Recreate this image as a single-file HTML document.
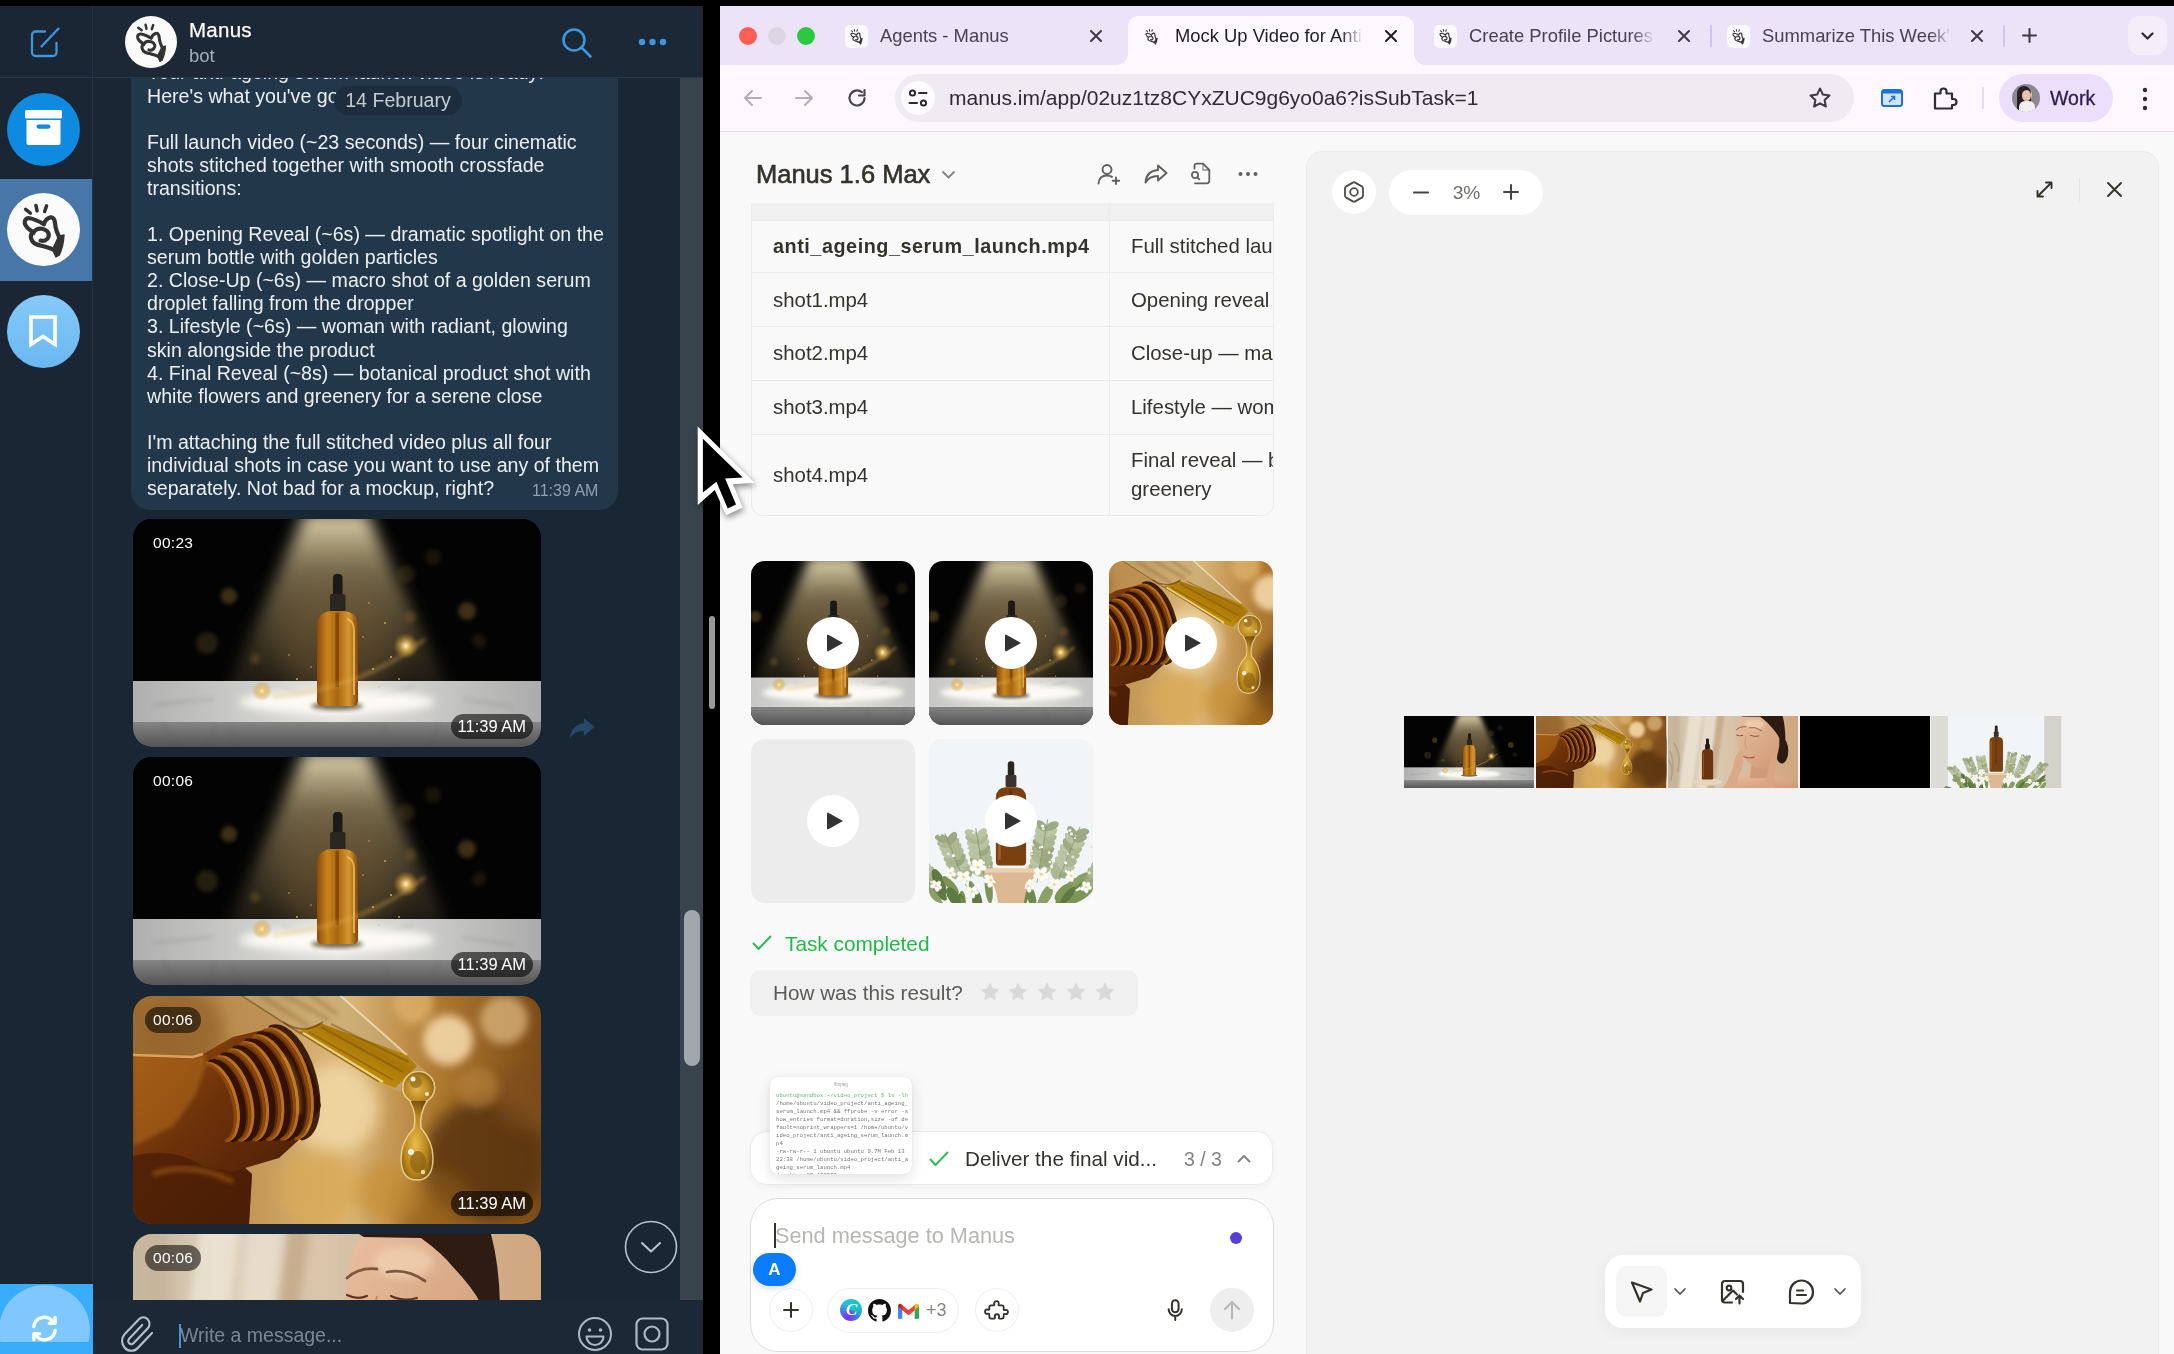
<!DOCTYPE html>
<html lang="en">
<head>
<meta charset="utf-8">
<title>Manus</title>
<style>
*{box-sizing:border-box;margin:0;padding:0}
html,body{width:2174px;height:1354px;overflow:hidden;background:#000}
body{position:relative;font-family:"Liberation Sans",sans-serif;color:#fff;-webkit-font-smoothing:antialiased}
.a{position:absolute}
#tg,#br{will-change:transform}
svg{display:block;overflow:visible}
.nw{white-space:nowrap}
/* ---------- left app ---------- */
#tg{left:0;top:6px;width:703px;height:1348px;background:#192735;overflow:hidden}
#side{left:0;top:0;width:93px;height:1348px;background:#1a2633;border-right:1px solid #243241}
#hdr{left:93px;top:0;width:610px;height:71px;background:#1c2835}
#hline{left:0;top:71px;width:703px;height:1px;background:#2a3847}
#chat{left:93px;top:72px;width:610px;height:1222px;background:#192735;overflow:hidden}
#inbar{left:93px;top:1294px;width:610px;height:54px;background:#1c2835}
.circ{border-radius:50%;width:73px;height:73px;left:7px}
/* ---------- browser ---------- */
#br{left:720px;top:6px;width:1454px;height:1348px;background:#f9f9f9;overflow:hidden}
#tabs{left:0;top:0;width:1454px;height:59px;background:#ece3f8}
#tool{left:0;top:59px;width:1454px;height:67px;background:#fdf8ff;border-bottom:1px solid #e6dfeb}
#page{left:0;top:126px;width:1454px;height:1222px;background:#f9f9f9}
#panel{left:586px;top:19px;width:853px;height:1210px;background:#f2f2f2;border:1px solid #ebebeb;border-radius:16px 16px 0 0}

/* chat */
#hdr .nm{left:96px;top:12px;font-size:20.5px;font-weight:400;color:#fff;-webkit-text-stroke:.25px #fff;letter-spacing:.25px}
#hdr .sub{left:96px;top:39px;font-size:18.5px;color:#a3afba}
#bub{left:38px;top:-40px;width:487px;height:472px;background:#23374a;border-radius:0 0 19px 19px}
#msg{left:54px;top:-16.600px;font-size:19.600px;line-height:23.100px;color:#ebeff3;white-space:nowrap}
#msgt{left:439px;top:404px;font-size:16px;color:#8ea1b2}
#pill{left:241px;top:8px;width:128px;height:29px;border-radius:15px;background:#1d2d3d;font-size:19.600px;line-height:29px;text-align:center;color:#c4ccd4}
.vid{left:40px;width:408px;height:228px;border-radius:19px;overflow:hidden;background:#000}
.dur{left:12px;top:11px;height:26px;padding:0 8px;border-radius:13px;background:rgba(0,0,0,.55);font-size:15.500px;line-height:26px;color:#fff;letter-spacing:.3px}
.tm{right:8px;bottom:8px;height:25px;padding:0 7px;border-radius:12.500px;background:rgba(0,0,0,.58);font-size:16.500px;line-height:25px;color:#fff}
#ph{left:87px;top:24px;font-size:19.500px;color:#7b8894}

/* tabs */
.tl{top:21px;width:18px;height:18px;border-radius:50%}
.fav{top:19px;width:23px;height:23px;border-radius:5px;background:#fbf8fe}
.tt{top:19px;font-size:18.400px;line-height:22px;color:#48414f;overflow:hidden;-webkit-mask-image:linear-gradient(90deg,#000 calc(100% - 22px),transparent);mask-image:linear-gradient(90deg,#000 calc(100% - 22px),transparent)}
.tx{top:24px}
.tsep{top:19px;width:2px;height:22px;background:#cfc4ec;border-radius:1px}
#atab{left:408px;top:10px;width:286px;height:49px;background:#fdf8ff;border-radius:11px 11px 0 0}
#atab:before,#atab:after{content:"";position:absolute;bottom:0;width:11px;height:11px;background:radial-gradient(circle at 0 0,transparent 10.500px,#fdf8ff 11px)}
#atab:before{left:-11px}
#atab:after{right:-11px;background:radial-gradient(circle at 100% 0,transparent 10.500px,#fdf8ff 11px)}
#omni{left:175px;top:9px;width:959px;height:48px;border-radius:24px;background:#f0eaf3}
#url{left:229px;top:20px;font-size:21px;line-height:26px;color:#2f2b33}
#chip{left:1279px;top:9px;width:114px;height:48px;border-radius:24px;background:#ebdffb}

/* page */
#ttl{left:36px;top:27px;font-size:25.500px;line-height:30px;color:#34322d;-webkit-text-stroke:.6px #34322d}
#tbl{left:31px;top:71px;width:523px;height:313px;border:1px solid #ebebeb;border-top:none;border-radius:0 0 12px 12px;overflow:hidden;background:#f9f9f9}
#tbl .h{left:0;top:0;width:523px;height:17px;background:#f0f0f0}
#tbl .r{left:0;width:523px;height:1px;background:#ebebeb}
#tbl .c{left:357px;top:0;width:1px;height:313px;background:#ebebeb}
#tbl .t{font-size:20.400px;line-height:29px;color:#34322d;white-space:nowrap}
.tile{width:164px;height:164px;border-radius:14px;overflow:hidden;background:#ececec}
.play{left:56px;top:56px;width:52px;height:52px;border-radius:50%;background:#fff}
.play:after{content:"";position:absolute;left:20px;top:16.500px;border-left:16px solid #333;border-top:9.500px solid transparent;border-bottom:9.500px solid transparent;border-radius:2px}
.ib{border-radius:50%;border:1px solid #eeeeee;background:#fff}
</style>
</head>
<body>
<svg width="0" height="0" style="position:absolute">
<defs>
<symbol id="hand" viewBox="0 0 100 100">
  <g fill="none" stroke="#333" stroke-width="5.8" stroke-linecap="round" stroke-linejoin="round">
    <path d="M25.5 22.5 L32 27.5 M39.6 17 L41.2 24.5 M54.2 17.6 L51.6 25.4" stroke-width="4.8"/>
    <path d="M50.5 42.5 C44 39 37 35.5 31 34.6 C25.5 34 23.5 38 24.5 42 C25.5 46.5 30 50 35.5 53.5 C32 57 32 62 35 66.5 C38 71 44 71.5 50 73 C56 74.5 60 76 65 78"/>
    <path d="M50.5 42.5 C52 38 55 34.5 59 33.5 C63 32.8 65 35.5 65.5 39.5 C66 44 66.5 48 68 52 C69.5 55.5 70 58 72 61"/>
    <path d="M46 65.2 C50 66.5 55.5 65 57 59.5 C58.2 54 54 50 48 49 C42 48.2 37.5 51 36 55"/>
  </g>
  <path d="M63 76 L70 61 L74 58.5 L78 57.5 C77.5 68 75 78 71.5 85 L67 87.5 C65 83.5 64 80 62 77.5 Z" fill="#333" stroke="#333" stroke-width="2" stroke-linejoin="round"/>
</symbol>
</defs></svg>
<svg width="0" height="0" style="position:absolute">
<defs>
<filter id="b2" x="-30%" y="-30%" width="160%" height="160%"><feGaussianBlur stdDeviation="2"/></filter>
<filter id="b4" x="-30%" y="-30%" width="160%" height="160%"><feGaussianBlur stdDeviation="4"/></filter>
<filter id="b8" x="-30%" y="-30%" width="160%" height="160%"><feGaussianBlur stdDeviation="8"/></filter>
<filter id="b14" x="-40%" y="-40%" width="180%" height="180%"><feGaussianBlur stdDeviation="14"/></filter>
<linearGradient id="coneg" x1="0" y1="0" x2="0" y2="1"><stop offset="0" stop-color="#e6dab4" stop-opacity="1"/><stop offset=".3" stop-color="#ad9b70" stop-opacity=".7"/><stop offset="1" stop-color="#6b5a3a" stop-opacity=".2"/></linearGradient>
<linearGradient id="mtop" x1="0" y1="0" x2="1" y2="0"><stop offset="0" stop-color="#afafaf"/><stop offset=".3" stop-color="#cfcfcd"/><stop offset=".5" stop-color="#e4e3de"/><stop offset=".72" stop-color="#cbcbc9"/><stop offset="1" stop-color="#ababab"/></linearGradient>
<linearGradient id="mfront" x1="0" y1="0" x2="0" y2="1"><stop offset="0" stop-color="#858585"/><stop offset="1" stop-color="#525252"/></linearGradient>
<linearGradient id="amber" x1="0" y1="0" x2="1" y2="0"><stop offset="0" stop-color="#8a4a08"/><stop offset=".25" stop-color="#c8851e"/><stop offset=".5" stop-color="#a8660f"/><stop offset=".78" stop-color="#d69830"/><stop offset="1" stop-color="#84450a"/></linearGradient>
<radialGradient id="spark"><stop offset="0" stop-color="#fff6d8"/><stop offset=".25" stop-color="#f1c66a" stop-opacity=".9"/><stop offset="1" stop-color="#c08a20" stop-opacity="0"/></radialGradient>

<!-- scene 1 : bottle under spotlight -->
<symbol id="sc1" viewBox="0 0 408 228" preserveAspectRatio="xMidYMid slice">
  <rect width="408" height="228" fill="#030303"/>
  <polygon points="172,-6 234,-6 318,176 92,176" fill="url(#coneg)" filter="url(#b8)"/>
  <ellipse cx="204" cy="120" rx="60" ry="60" fill="#7a6238" opacity=".45" filter="url(#b14)"/>
  <g fill="#6d5528" opacity=".55" filter="url(#b2)"><circle cx="96" cy="77" r="8"/><circle cx="334" cy="92" r="9"/><circle cx="74" cy="124" r="11" opacity=".6"/><circle cx="273" cy="55" r="9" opacity=".5"/><circle cx="277" cy="98" r="6"/><circle cx="122" cy="140" r="5"/><circle cx="300" cy="38" r="8" opacity=".4"/><circle cx="346" cy="122" r="7" opacity=".4"/></g>
  <rect y="162" width="408" height="42" fill="url(#mtop)"/>
  <rect y="203" width="408" height="26" fill="url(#mfront)"/>
  <path d="M30 204l14 24M82 205l-6 23M96 208l10 20M250 206l8 22M306 204l-10 24M384 205l6 23M150 170l40 10M280 168l-46 14M330 180l50 8M20 186l60 -6" stroke="#5a5a5a" stroke-width="1.600" opacity=".3" fill="none" filter="url(#b2)"/>
  <ellipse cx="204" cy="183" rx="98" ry="12" fill="#fffdf6" opacity=".92" filter="url(#b4)"/>
  <ellipse cx="204" cy="187" rx="26" ry="4" fill="#3a2a12" opacity=".7" filter="url(#b2)"/>
  <rect x="200" y="55" width="9.500" height="24" rx="4" fill="#1c1a18"/>
  <rect x="197" y="75" width="15.500" height="19" rx="2" fill="#2a2622"/>
  <path d="M184 108Q184 93 198 92H211Q225 93 225 108V182Q225 187 220 187H189Q184 187 184 182Z" fill="url(#amber)"/>
  <rect x="202.500" y="94" width="3.500" height="74" fill="#7a3e04" opacity=".75"/>
  <path d="M214 100Q221 102 221 112V176" stroke="#f6c768" stroke-width="2" fill="none" opacity=".7"/>
  <path d="M140 178Q230 170 292 120" stroke="#e6b552" stroke-width="2.500" fill="none" opacity=".55" filter="url(#b2)"/>
  <circle cx="273" cy="127" r="13" fill="url(#spark)"/><circle cx="129" cy="172" r="10" fill="url(#spark)"/>
  <g fill="#e9c271" opacity=".8"><circle cx="240" cy="150" r="1"/><circle cx="252" cy="104" r=".9"/><circle cx="164" cy="160" r="1"/><circle cx="236" cy="84" r=".8"/><circle cx="258" cy="138" r="1.100"/><circle cx="178" cy="148" r=".8"/><circle cx="246" cy="168" r="1"/><circle cx="156" cy="136" r=".8"/><circle cx="230" cy="118" r=".8"/><circle cx="266" cy="160" r=".9"/></g>
</symbol>

<!-- scene 2 : dropper macro -->
<linearGradient id="s2bg" x1="0" y1="0" x2="1" y2="0"><stop offset="0" stop-color="#9c6a30"/><stop offset=".3" stop-color="#c49856"/><stop offset=".52" stop-color="#dcb97e"/><stop offset=".74" stop-color="#b07a30"/><stop offset="1" stop-color="#7c4c18"/></linearGradient>
<linearGradient id="s2bot" x1="0" y1="0" x2="1" y2="1"><stop offset="0" stop-color="#9a5614"/><stop offset=".4" stop-color="#6e320a"/><stop offset="1" stop-color="#3e1704"/></linearGradient>
<linearGradient id="s2ring" x1="0" y1="0" x2="1" y2="1"><stop offset="0" stop-color="#8a4710"/><stop offset=".5" stop-color="#5e2806"/><stop offset="1" stop-color="#7a3a0c"/></linearGradient>
<linearGradient id="s2liq" x1="0" y1="1" x2="1" y2="0"><stop offset="0" stop-color="#f0d468"/><stop offset=".3" stop-color="#c9960c"/><stop offset=".6" stop-color="#a87608"/><stop offset="1" stop-color="#d8ae2c"/></linearGradient>
<radialGradient id="s2drop" cx=".45" cy=".55" r=".6"><stop offset="0" stop-color="#e8bc4c"/><stop offset=".6" stop-color="#b8861c"/><stop offset="1" stop-color="#6e480a"/></radialGradient>
<symbol id="sc2" viewBox="0 0 408 228" preserveAspectRatio="xMidYMid slice">
  <rect width="408" height="228" fill="url(#s2bg)"/>
  <g filter="url(#b8)"><circle cx="352" cy="165" r="62" fill="#58320e" opacity=".85"/><circle cx="395" cy="100" r="34" fill="#7c4c1a" opacity=".7"/><circle cx="300" cy="215" r="40" fill="#8a5818" opacity=".6"/><circle cx="202" cy="112" r="44" fill="#efd6a2" opacity=".9"/><circle cx="188" cy="192" r="40" fill="#d8aa58" opacity=".85"/><circle cx="254" cy="196" r="30" fill="#c68e34" opacity=".7"/><circle cx="50" cy="36" r="42" fill="#92602a" opacity=".7"/><circle cx="130" cy="22" r="30" fill="#b88a4e" opacity=".6"/></g>
  <g filter="url(#b4)"><circle cx="315" cy="44" r="25" fill="#efd2a2" opacity=".95"/><circle cx="280" cy="8" r="20" fill="#dcae68" opacity=".85"/><circle cx="371" cy="24" r="24" fill="#d2aa74" opacity=".85"/><circle cx="345" cy="92" r="20" fill="#b98844" opacity=".5"/></g>
  <!-- bottle silhouette -->
  <path d="M0 59L60 61L70 58L100 41L138 32Q176 46 188 110L169 141L146 162L112 172L119 178L116 228H0Z" fill="url(#s2bot)"/>
  <path d="M0 59L60 61L70 58L74 66L62 100L40 130L0 150Z" fill="#b46a1c" opacity=".55" filter="url(#b2)"/>
  <path d="M0 160Q40 150 70 170L100 176L112 172L119 178L116 228H0Z" fill="#4a1d05" opacity=".75"/>
  <path d="M20 178Q60 165 100 186" stroke="#a85e18" stroke-width="5" fill="none" opacity=".6" filter="url(#b2)"/>
  <path d="M0 59L60 61L70 58" stroke="#e0aa66" stroke-width="2.500" fill="none" opacity=".9"/>
  <path d="M78.3 66.7A18.9 39.6 -15.700 0 1 99.7 143.0" fill="none" stroke="#2e0f02" stroke-width="6.500" opacity=".9" stroke-linecap="round"/><path d="M78.3 66.7A18.9 39.6 -15.700 0 1 99.7 143.0" fill="none" stroke="#c97c22" stroke-width="3.200" opacity=".85" stroke-linecap="round" transform="translate(-4.800 1.300)"/><path d="M78.3 66.7A18.9 39.6 -15.700 0 1 99.7 143.0" fill="none" stroke="#8c4a10" stroke-width="3" opacity=".9" transform="translate(-8 2.200)"/><path d="M90.4 59.8A20.5 43.0 -15.700 0 1 113.6 142.6" fill="none" stroke="#2e0f02" stroke-width="6.500" opacity=".9" stroke-linecap="round"/><path d="M90.4 59.8A20.5 43.0 -15.700 0 1 113.6 142.6" fill="none" stroke="#c97c22" stroke-width="3.200" opacity=".85" stroke-linecap="round" transform="translate(-4.800 1.300)"/><path d="M90.4 59.8A20.5 43.0 -15.700 0 1 113.6 142.6" fill="none" stroke="#8c4a10" stroke-width="3" opacity=".9" transform="translate(-8 2.200)"/><path d="M102.4 52.9A22.1 46.4 -15.700 0 1 127.6 142.2" fill="none" stroke="#2e0f02" stroke-width="6.500" opacity=".9" stroke-linecap="round"/><path d="M102.4 52.9A22.1 46.4 -15.700 0 1 127.6 142.2" fill="none" stroke="#c97c22" stroke-width="3.200" opacity=".85" stroke-linecap="round" transform="translate(-4.800 1.300)"/><path d="M102.4 52.9A22.1 46.4 -15.700 0 1 127.6 142.2" fill="none" stroke="#8c4a10" stroke-width="3" opacity=".9" transform="translate(-8 2.200)"/><path d="M114.5 45.9A23.8 49.8 -15.700 0 1 141.5 141.8" fill="none" stroke="#2e0f02" stroke-width="6.500" opacity=".9" stroke-linecap="round"/><path d="M114.5 45.9A23.8 49.8 -15.700 0 1 141.5 141.8" fill="none" stroke="#c97c22" stroke-width="3.200" opacity=".85" stroke-linecap="round" transform="translate(-4.800 1.300)"/><path d="M114.5 45.9A23.8 49.8 -15.700 0 1 141.5 141.8" fill="none" stroke="#8c4a10" stroke-width="3" opacity=".9" transform="translate(-8 2.200)"/><path d="M126.6 39.0A25.4 53.2 -15.700 0 1 155.4 141.5" fill="none" stroke="#2e0f02" stroke-width="6.500" opacity=".9" stroke-linecap="round"/><path d="M126.6 39.0A25.4 53.2 -15.700 0 1 155.4 141.5" fill="none" stroke="#c97c22" stroke-width="3.200" opacity=".85" stroke-linecap="round" transform="translate(-4.800 1.300)"/><path d="M126.6 39.0A25.4 53.2 -15.700 0 1 155.4 141.5" fill="none" stroke="#8c4a10" stroke-width="3" opacity=".9" transform="translate(-8 2.200)"/><path d="M138.7 32.1A27.0 56.6 -15.700 0 1 169.3 141.1" fill="none" stroke="#2e0f02" stroke-width="6.500" opacity=".9" stroke-linecap="round"/><path d="M138.7 32.1A27.0 56.6 -15.700 0 1 169.3 141.1" fill="none" stroke="#c97c22" stroke-width="3.200" opacity=".85" stroke-linecap="round" transform="translate(-4.800 1.300)"/><path d="M138.7 32.1A27.0 56.6 -15.700 0 1 169.3 141.1" fill="none" stroke="#8c4a10" stroke-width="3" opacity=".9" transform="translate(-8 2.200)"/>
  <path d="M150 60Q168 84 166 118" stroke="#e8a848" stroke-width="3" fill="none" opacity=".5" filter="url(#b2)"/>
  <!-- dropper glass -->
  <path d="M106 -2L205.400 -2L274 59L296 78L266 96L245.600 85.600L165.300 36Z" fill="#c4a872" opacity=".6"/><path d="M128 0L176 30M150 -2L196 24M176 -2L204 18" stroke="#6a4616" stroke-width="3" opacity=".35" fill="none" filter="url(#b2)"/>
  <path d="M165.300 36L187 27L274 59L284 70L262 92L245.600 85.600Z" fill="url(#s2liq)"/>
  <path d="M176 36L260 84M188 31L270 76M198 28L276 66" stroke="#7a5206" stroke-width="2" opacity=".5" fill="none"/>
  <path d="M170 37L250 86" stroke="#f6e08a" stroke-width="2.600" opacity=".85" fill="none"/>
  <path d="M106 -2L165.300 36L245.600 85.600" stroke="#6a4a1a" stroke-width="1.500" opacity=".6" fill="none"/><path d="M205.400 -2L274 59" stroke="#fff4d6" stroke-width="2" opacity=".6" fill="none"/>
  <path d="M150 26Q170 40 190 26" stroke="#5a3a10" stroke-width="2" opacity=".55" fill="none"/>
  <!-- tip + drop -->
  <circle cx="285.700" cy="91.400" r="17" fill="url(#s2drop)" opacity=".92"/>
  <circle cx="285.700" cy="91.400" r="16" fill="none" stroke="#f4e0a4" stroke-width="1.800" opacity=".8"/>
  <circle cx="283" cy="86" r="6" fill="#8a6418" opacity=".6"/><circle cx="280" cy="83" r="2.500" fill="#fff" opacity=".9"/><circle cx="294" cy="98" r="2" fill="#fff" opacity=".8"/>
  <path d="M277 105Q284 118 281 132Q268 146 268 162Q268 184 284 184Q300 184 300 162Q300 146 288 132Q286 118 294 105Z" fill="url(#s2drop)"/>
  <path d="M277 105Q284 118 281 132Q268 146 268 162Q268 184 284 184Q300 184 300 162Q300 146 288 132Q286 118 294 105" fill="none" stroke="#f2dc9c" stroke-width="1.500" opacity=".85"/>
  <ellipse cx="285" cy="166" rx="8" ry="11" fill="#7a520a" opacity=".55"/><circle cx="278" cy="156" r="3" fill="#fff" opacity=".85"/><circle cx="290" cy="176" r="2.200" fill="#ffe9a8" opacity=".9"/>
</symbol>
</defs></svg>
<svg width="0" height="0" style="position:absolute">
<defs>
<linearGradient id="s3bg" x1="0" y1="0" x2="1" y2="0"><stop offset="0" stop-color="#c7b59b"/><stop offset=".22" stop-color="#dccfb9"/><stop offset=".45" stop-color="#d6c6ad"/><stop offset=".8" stop-color="#d3b08a"/><stop offset="1" stop-color="#cfa680"/></linearGradient>
<linearGradient id="skin" x1="0" y1="0" x2="1" y2="1"><stop offset="0" stop-color="#e8bfa0"/><stop offset="1" stop-color="#cf9873"/></linearGradient>
<!-- scene 3 : woman -->
<symbol id="sc3" viewBox="0 0 408 228" preserveAspectRatio="xMidYMid slice">
  <rect width="408" height="228" fill="url(#s3bg)"/>
  <g filter="url(#b4)"><rect x="52" y="-10" width="40" height="250" fill="#ece3d4" opacity=".85" transform="rotate(8 70 100)"/><rect x="104" y="-10" width="36" height="250" fill="#eadfce" opacity=".8" transform="rotate(6 120 100)"/><rect x="146" y="-10" width="22" height="250" fill="#c2a482" opacity=".75" transform="rotate(8 156 60)"/><rect x="176" y="-10" width="30" height="250" fill="#dcc4a6" opacity=".7"/><rect x="14" y="-10" width="22" height="250" fill="#bfae94" opacity=".5"/></g>
  <path d="M4 110Q20 130 12 190M18 86Q44 120 30 176M2 140Q18 160 8 206" stroke="#96866a" stroke-width="5" fill="none" opacity=".45" filter="url(#b2)"/>
  <!-- shoulders -->
  <path d="M168 228Q190 192 250 186L330 186Q392 196 408 214V228Z" fill="url(#skin)"/>
  <!-- hair back / bun -->
  <ellipse cx="356" cy="110" rx="20" ry="40" fill="#2b1a12"/>
  <path d="M226 0L358 0Q366 30 367 70Q366 110 350 132L320 60Z" fill="#2e1c13"/>
  <!-- neck -->
  <path d="M262 150L330 150L334 196L256 196Z" fill="#cf9a76"/>
  <!-- face -->
  <path d="M213 78Q211 30 228 3L288 4Q310 20 320 33Q340 54 348 70Q352 120 324 152Q296 176 270 160Q222 128 213 78Z" fill="url(#skin)"/>
  <ellipse cx="270" cy="28" rx="30" ry="16" fill="#f3d4b4" opacity=".7" filter="url(#b4)"/>
  <path d="M214 44Q226 33 244 35" stroke="#6a452e" stroke-width="2.800" fill="none" stroke-linecap="round" opacity=".85"/>
  <path d="M254 38Q274 34 292 47" stroke="#6a452e" stroke-width="2.800" fill="none" stroke-linecap="round" opacity=".85"/>
  <path d="M214 61Q224 66 234 62M258 62Q270 68 284 64" stroke="#5a3622" stroke-width="2.200" fill="none" stroke-linecap="round"/>
  <path d="M244 62Q236 96 248 104" stroke="#bf8862" stroke-width="2" fill="none"/>
  <path d="M236 128Q252 136 270 130" stroke="#b5564a" stroke-width="3.500" fill="none" stroke-linecap="round"/>
  <!-- hands -->
  <path d="M176 228L204 160Q208 124 226 108Q236 102 236 114L234 150Q232 170 222 186L212 228Z" fill="#dca988"/>
  <path d="M300 228L312 176Q316 140 330 118Q340 108 342 122L338 160L330 228Z" fill="#d9a482"/>
  <!-- bottle + stone -->
  <ellipse cx="124" cy="208" rx="46" ry="11" fill="#e6d6bf"/>
  <rect x="119" y="72" width="9" height="22" rx="3" fill="#1c1412"/><rect x="116" y="90" width="15" height="16" rx="2" fill="#241a16"/>
  <path d="M106 118Q106 106 118 105H130Q141 106 141 118V196Q141 200 137 200H110Q106 200 106 196Z" fill="#6a3410"/>
  <path d="M111 116V192" stroke="#a8622a" stroke-width="3" opacity=".7"/>
</symbol>

<!-- scene 5 : botanical -->
<symbol id="sc5" viewBox="0 0 408 228" preserveAspectRatio="xMidYMid slice">
  <rect width="408" height="228" fill="#f1f5f7"/>
  
  <rect width="53" height="228" fill="#dcdbd6"/><rect x="354" width="54" height="228" fill="#d5d2cb"/>
  <ellipse cx="129" cy="190" rx="5.5" ry="10.0" transform="rotate(-77 129 190)" fill="#a9b58e" opacity="0.95"/><ellipse cx="143" cy="190" rx="5.5" ry="10.0" transform="rotate(33 143 190)" fill="#98a77c" opacity="0.95"/><ellipse cx="126" cy="183" rx="5.5" ry="10.0" transform="rotate(-77 126 183)" fill="#b7c2a0" opacity="0.95"/><ellipse cx="140" cy="183" rx="5.5" ry="10.0" transform="rotate(33 140 183)" fill="#a9b58e" opacity="0.95"/><ellipse cx="123" cy="175" rx="5.5" ry="10.0" transform="rotate(-77 123 175)" fill="#a9b58e" opacity="0.95"/><ellipse cx="137" cy="175" rx="5.5" ry="10.0" transform="rotate(33 137 175)" fill="#b7c2a0" opacity="0.95"/><ellipse cx="120" cy="168" rx="5.5" ry="10.0" transform="rotate(-77 120 168)" fill="#a9b58e" opacity="0.95"/><ellipse cx="134" cy="168" rx="5.5" ry="10.0" transform="rotate(33 134 168)" fill="#98a77c" opacity="0.95"/><ellipse cx="117" cy="160" rx="5.5" ry="10.0" transform="rotate(-77 117 160)" fill="#b7c2a0" opacity="0.95"/><ellipse cx="131" cy="160" rx="5.5" ry="10.0" transform="rotate(33 131 160)" fill="#a9b58e" opacity="0.95"/><ellipse cx="114" cy="153" rx="5.5" ry="10.0" transform="rotate(-77 114 153)" fill="#b7c2a0" opacity="0.95"/><ellipse cx="128" cy="153" rx="5.5" ry="10.0" transform="rotate(33 128 153)" fill="#a9b58e" opacity="0.95"/><ellipse cx="111" cy="146" rx="5.5" ry="10.0" transform="rotate(-77 111 146)" fill="#a9b58e" opacity="0.95"/><ellipse cx="125" cy="146" rx="5.5" ry="10.0" transform="rotate(33 125 146)" fill="#a9b58e" opacity="0.95"/><ellipse cx="108" cy="138" rx="5.5" ry="10.0" transform="rotate(-77 108 138)" fill="#98a77c" opacity="0.95"/><ellipse cx="122" cy="138" rx="5.5" ry="10.0" transform="rotate(33 122 138)" fill="#98a77c" opacity="0.95"/><path d="M142 205L112 131" stroke="#8b9a70" stroke-width="1.200"/><ellipse cx="92" cy="204" rx="5.5" ry="10.0" transform="rotate(-95 92 204)" fill="#a9b58e" opacity="0.95"/><ellipse cx="106" cy="204" rx="5.5" ry="10.0" transform="rotate(15 106 204)" fill="#a9b58e" opacity="0.95"/><ellipse cx="87" cy="198" rx="5.5" ry="10.0" transform="rotate(-95 87 198)" fill="#b7c2a0" opacity="0.95"/><ellipse cx="101" cy="198" rx="5.5" ry="10.0" transform="rotate(15 101 198)" fill="#98a77c" opacity="0.95"/><ellipse cx="82" cy="193" rx="5.5" ry="10.0" transform="rotate(-95 82 193)" fill="#a9b58e" opacity="0.95"/><ellipse cx="96" cy="193" rx="5.5" ry="10.0" transform="rotate(15 96 193)" fill="#b7c2a0" opacity="0.95"/><ellipse cx="78" cy="187" rx="5.5" ry="10.0" transform="rotate(-95 78 187)" fill="#a9b58e" opacity="0.95"/><ellipse cx="92" cy="187" rx="5.5" ry="10.0" transform="rotate(15 92 187)" fill="#a9b58e" opacity="0.95"/><ellipse cx="73" cy="182" rx="5.5" ry="10.0" transform="rotate(-95 73 182)" fill="#b7c2a0" opacity="0.95"/><ellipse cx="87" cy="182" rx="5.5" ry="10.0" transform="rotate(15 87 182)" fill="#b7c2a0" opacity="0.95"/><ellipse cx="69" cy="176" rx="5.5" ry="10.0" transform="rotate(-95 69 176)" fill="#b7c2a0" opacity="0.95"/><ellipse cx="83" cy="176" rx="5.5" ry="10.0" transform="rotate(15 83 176)" fill="#a9b58e" opacity="0.95"/><ellipse cx="64" cy="171" rx="5.5" ry="10.0" transform="rotate(-95 64 171)" fill="#b7c2a0" opacity="0.95"/><ellipse cx="78" cy="171" rx="5.5" ry="10.0" transform="rotate(15 78 171)" fill="#b7c2a0" opacity="0.95"/><ellipse cx="59" cy="165" rx="5.5" ry="10.0" transform="rotate(-95 59 165)" fill="#98a77c" opacity="0.95"/><ellipse cx="73" cy="165" rx="5.5" ry="10.0" transform="rotate(15 73 165)" fill="#a9b58e" opacity="0.95"/><path d="M108 215L62 160" stroke="#8b9a70" stroke-width="1.200"/><ellipse cx="158" cy="185" rx="5.5" ry="10.0" transform="rotate(-65 158 185)" fill="#a9b58e" opacity="0.95"/><ellipse cx="172" cy="185" rx="5.5" ry="10.0" transform="rotate(45 172 185)" fill="#b7c2a0" opacity="0.95"/><ellipse cx="157" cy="177" rx="5.5" ry="10.0" transform="rotate(-65 157 177)" fill="#a9b58e" opacity="0.95"/><ellipse cx="171" cy="177" rx="5.5" ry="10.0" transform="rotate(45 171 177)" fill="#98a77c" opacity="0.95"/><ellipse cx="156" cy="170" rx="5.5" ry="10.0" transform="rotate(-65 156 170)" fill="#98a77c" opacity="0.95"/><ellipse cx="170" cy="170" rx="5.5" ry="10.0" transform="rotate(45 170 170)" fill="#a9b58e" opacity="0.95"/><ellipse cx="154" cy="162" rx="5.5" ry="10.0" transform="rotate(-65 154 162)" fill="#b7c2a0" opacity="0.95"/><ellipse cx="168" cy="162" rx="5.5" ry="10.0" transform="rotate(45 168 162)" fill="#a9b58e" opacity="0.95"/><ellipse cx="153" cy="155" rx="5.5" ry="10.0" transform="rotate(-65 153 155)" fill="#b7c2a0" opacity="0.95"/><ellipse cx="167" cy="155" rx="5.5" ry="10.0" transform="rotate(45 167 155)" fill="#98a77c" opacity="0.95"/><ellipse cx="152" cy="147" rx="5.5" ry="10.0" transform="rotate(-65 152 147)" fill="#b7c2a0" opacity="0.95"/><ellipse cx="166" cy="147" rx="5.5" ry="10.0" transform="rotate(45 166 147)" fill="#b7c2a0" opacity="0.95"/><ellipse cx="150" cy="139" rx="5.5" ry="10.0" transform="rotate(-65 150 139)" fill="#a9b58e" opacity="0.95"/><ellipse cx="164" cy="139" rx="5.5" ry="10.0" transform="rotate(45 164 139)" fill="#a9b58e" opacity="0.95"/><ellipse cx="149" cy="132" rx="5.5" ry="10.0" transform="rotate(-65 149 132)" fill="#b7c2a0" opacity="0.95"/><ellipse cx="163" cy="132" rx="5.5" ry="10.0" transform="rotate(45 163 132)" fill="#b7c2a0" opacity="0.95"/><path d="M168 200L155 124" stroke="#8b9a70" stroke-width="1.200"/><ellipse cx="266" cy="188" rx="5.5" ry="10.0" transform="rotate(-33 266 188)" fill="#a9b58e" opacity="0.95"/><ellipse cx="280" cy="188" rx="5.5" ry="10.0" transform="rotate(77 280 188)" fill="#98a77c" opacity="0.95"/><ellipse cx="269" cy="180" rx="5.5" ry="10.0" transform="rotate(-33 269 180)" fill="#a9b58e" opacity="0.95"/><ellipse cx="283" cy="180" rx="5.5" ry="10.0" transform="rotate(77 283 180)" fill="#b7c2a0" opacity="0.95"/><ellipse cx="272" cy="172" rx="5.5" ry="10.0" transform="rotate(-33 272 172)" fill="#b7c2a0" opacity="0.95"/><ellipse cx="286" cy="172" rx="5.5" ry="10.0" transform="rotate(77 286 172)" fill="#a9b58e" opacity="0.95"/><ellipse cx="276" cy="163" rx="5.5" ry="10.0" transform="rotate(-33 276 163)" fill="#b7c2a0" opacity="0.95"/><ellipse cx="290" cy="163" rx="5.5" ry="10.0" transform="rotate(77 290 163)" fill="#a9b58e" opacity="0.95"/><ellipse cx="279" cy="155" rx="5.5" ry="10.0" transform="rotate(-33 279 155)" fill="#b7c2a0" opacity="0.95"/><ellipse cx="293" cy="155" rx="5.5" ry="10.0" transform="rotate(77 293 155)" fill="#a9b58e" opacity="0.95"/><ellipse cx="283" cy="147" rx="5.5" ry="10.0" transform="rotate(-33 283 147)" fill="#98a77c" opacity="0.95"/><ellipse cx="297" cy="147" rx="5.5" ry="10.0" transform="rotate(77 297 147)" fill="#b7c2a0" opacity="0.95"/><ellipse cx="286" cy="138" rx="5.5" ry="10.0" transform="rotate(-33 286 138)" fill="#b7c2a0" opacity="0.95"/><ellipse cx="300" cy="138" rx="5.5" ry="10.0" transform="rotate(77 300 138)" fill="#98a77c" opacity="0.95"/><ellipse cx="289" cy="130" rx="5.5" ry="10.0" transform="rotate(-33 289 130)" fill="#98a77c" opacity="0.95"/><ellipse cx="303" cy="130" rx="5.5" ry="10.0" transform="rotate(77 303 130)" fill="#98a77c" opacity="0.95"/><path d="M266 205L300 122" stroke="#8b9a70" stroke-width="1.200"/><ellipse cx="304" cy="202" rx="5.5" ry="10.0" transform="rotate(-15 304 202)" fill="#98a77c" opacity="0.95"/><ellipse cx="318" cy="202" rx="5.5" ry="10.0" transform="rotate(95 318 202)" fill="#98a77c" opacity="0.95"/><ellipse cx="310" cy="195" rx="5.5" ry="10.0" transform="rotate(-15 310 195)" fill="#98a77c" opacity="0.95"/><ellipse cx="324" cy="195" rx="5.5" ry="10.0" transform="rotate(95 324 195)" fill="#a9b58e" opacity="0.95"/><ellipse cx="316" cy="188" rx="5.5" ry="10.0" transform="rotate(-15 316 188)" fill="#a9b58e" opacity="0.95"/><ellipse cx="330" cy="188" rx="5.5" ry="10.0" transform="rotate(95 330 188)" fill="#b7c2a0" opacity="0.95"/><ellipse cx="321" cy="181" rx="5.5" ry="10.0" transform="rotate(-15 321 181)" fill="#a9b58e" opacity="0.95"/><ellipse cx="335" cy="181" rx="5.5" ry="10.0" transform="rotate(95 335 181)" fill="#a9b58e" opacity="0.95"/><ellipse cx="327" cy="175" rx="5.5" ry="10.0" transform="rotate(-15 327 175)" fill="#b7c2a0" opacity="0.95"/><ellipse cx="341" cy="175" rx="5.5" ry="10.0" transform="rotate(95 341 175)" fill="#98a77c" opacity="0.95"/><ellipse cx="333" cy="168" rx="5.5" ry="10.0" transform="rotate(-15 333 168)" fill="#b7c2a0" opacity="0.95"/><ellipse cx="347" cy="168" rx="5.5" ry="10.0" transform="rotate(95 347 168)" fill="#98a77c" opacity="0.95"/><ellipse cx="338" cy="161" rx="5.5" ry="10.0" transform="rotate(-15 338 161)" fill="#98a77c" opacity="0.95"/><ellipse cx="352" cy="161" rx="5.5" ry="10.0" transform="rotate(95 352 161)" fill="#b7c2a0" opacity="0.95"/><ellipse cx="344" cy="154" rx="5.5" ry="10.0" transform="rotate(-15 344 154)" fill="#98a77c" opacity="0.95"/><ellipse cx="358" cy="154" rx="5.5" ry="10.0" transform="rotate(95 358 154)" fill="#98a77c" opacity="0.95"/><path d="M300 215L357 148" stroke="#8b9a70" stroke-width="1.200"/><ellipse cx="236" cy="182" rx="5.5" ry="10.0" transform="rotate(-45 236 182)" fill="#a9b58e" opacity="0.95"/><ellipse cx="250" cy="182" rx="5.5" ry="10.0" transform="rotate(65 250 182)" fill="#a9b58e" opacity="0.95"/><ellipse cx="238" cy="174" rx="5.5" ry="10.0" transform="rotate(-45 238 174)" fill="#b7c2a0" opacity="0.95"/><ellipse cx="252" cy="174" rx="5.5" ry="10.0" transform="rotate(65 252 174)" fill="#98a77c" opacity="0.95"/><ellipse cx="239" cy="165" rx="5.5" ry="10.0" transform="rotate(-45 239 165)" fill="#a9b58e" opacity="0.95"/><ellipse cx="253" cy="165" rx="5.5" ry="10.0" transform="rotate(65 253 165)" fill="#98a77c" opacity="0.95"/><ellipse cx="241" cy="156" rx="5.5" ry="10.0" transform="rotate(-45 241 156)" fill="#a9b58e" opacity="0.95"/><ellipse cx="255" cy="156" rx="5.5" ry="10.0" transform="rotate(65 255 156)" fill="#98a77c" opacity="0.95"/><ellipse cx="242" cy="147" rx="5.5" ry="10.0" transform="rotate(-45 242 147)" fill="#98a77c" opacity="0.95"/><ellipse cx="256" cy="147" rx="5.5" ry="10.0" transform="rotate(65 256 147)" fill="#a9b58e" opacity="0.95"/><ellipse cx="244" cy="139" rx="5.5" ry="10.0" transform="rotate(-45 244 139)" fill="#b7c2a0" opacity="0.95"/><ellipse cx="258" cy="139" rx="5.5" ry="10.0" transform="rotate(65 258 139)" fill="#a9b58e" opacity="0.95"/><ellipse cx="245" cy="130" rx="5.5" ry="10.0" transform="rotate(-45 245 130)" fill="#b7c2a0" opacity="0.95"/><ellipse cx="259" cy="130" rx="5.5" ry="10.0" transform="rotate(65 259 130)" fill="#b7c2a0" opacity="0.95"/><ellipse cx="247" cy="121" rx="5.5" ry="10.0" transform="rotate(-45 247 121)" fill="#98a77c" opacity="0.95"/><ellipse cx="261" cy="121" rx="5.5" ry="10.0" transform="rotate(65 261 121)" fill="#98a77c" opacity="0.95"/><path d="M240 200L255 112" stroke="#8b9a70" stroke-width="1.200"/><circle cx="258" cy="171" r="1.9" fill="#f1f2e8"/><circle cx="89" cy="128" r="1.5" fill="#dfe5d2"/><circle cx="249" cy="125" r="2.0" fill="#dfe5d2"/><circle cx="226" cy="178" r="1.7" fill="#dfe5d2"/><circle cx="174" cy="177" r="1.2" fill="#f1f2e8"/><circle cx="166" cy="172" r="1.8" fill="#ffffff"/><circle cx="277" cy="131" r="1.5" fill="#f1f2e8"/><circle cx="318" cy="162" r="1.4" fill="#f1f2e8"/><circle cx="218" cy="195" r="2.2" fill="#dfe5d2"/><circle cx="145" cy="155" r="1.6" fill="#f1f2e8"/><circle cx="329" cy="133" r="1.4" fill="#ffffff"/><circle cx="248" cy="121" r="2.2" fill="#ffffff"/><circle cx="141" cy="120" r="1.7" fill="#f1f2e8"/><circle cx="235" cy="147" r="1.4" fill="#dfe5d2"/><circle cx="327" cy="176" r="2.1" fill="#f1f2e8"/><circle cx="313" cy="186" r="2.2" fill="#dfe5d2"/><circle cx="176" cy="154" r="1.3" fill="#dfe5d2"/><circle cx="336" cy="157" r="1.3" fill="#dfe5d2"/><circle cx="84" cy="120" r="1.4" fill="#ffffff"/><circle cx="326" cy="172" r="1.3" fill="#ffffff"/><circle cx="236" cy="133" r="1.5" fill="#f1f2e8"/><circle cx="233" cy="160" r="1.3" fill="#f1f2e8"/><circle cx="338" cy="160" r="1.8" fill="#ffffff"/><circle cx="109" cy="184" r="2.1" fill="#f1f2e8"/><circle cx="294" cy="134" r="1.2" fill="#dfe5d2"/><circle cx="168" cy="179" r="2.3" fill="#dfe5d2"/><circle cx="150" cy="175" r="1.3" fill="#f1f2e8"/><circle cx="210" cy="197" r="1.6" fill="#ffffff"/><circle cx="214" cy="186" r="1.6" fill="#ffffff"/><circle cx="236" cy="187" r="2.1" fill="#ffffff"/><circle cx="288" cy="190" r="2.1" fill="#ffffff"/><circle cx="124" cy="162" r="2.1" fill="#ffffff"/><circle cx="283" cy="160" r="1.4" fill="#dfe5d2"/><circle cx="328" cy="158" r="2.3" fill="#f1f2e8"/><circle cx="328" cy="151" r="1.5" fill="#ffffff"/><circle cx="200" cy="204" r="1.9" fill="#ffffff"/><circle cx="286" cy="127" r="2.0" fill="#f1f2e8"/><circle cx="281" cy="184" r="1.8" fill="#ffffff"/><circle cx="93" cy="200" r="2.1" fill="#f1f2e8"/><circle cx="178" cy="200" r="2.1" fill="#ffffff"/><circle cx="338" cy="122" r="1.9" fill="#f1f2e8"/><circle cx="288" cy="132" r="2.2" fill="#f1f2e8"/><circle cx="247" cy="150" r="1.9" fill="#ffffff"/><circle cx="76" cy="188" r="2.1" fill="#ffffff"/><circle cx="212" cy="199" r="1.7" fill="#ffffff"/><circle cx="293" cy="138" r="1.5" fill="#f1f2e8"/><circle cx="205" cy="185" r="1.6" fill="#dfe5d2"/><circle cx="316" cy="150" r="1.7" fill="#dfe5d2"/><circle cx="290" cy="164" r="2.2" fill="#dfe5d2"/><circle cx="105" cy="133" r="1.8" fill="#f1f2e8"/><circle cx="280" cy="172" r="2.1" fill="#ffffff"/><circle cx="117" cy="160" r="2.1" fill="#dfe5d2"/><circle cx="87" cy="178" r="1.8" fill="#f1f2e8"/><circle cx="282" cy="129" r="1.9" fill="#ffffff"/><circle cx="122" cy="124" r="1.3" fill="#f1f2e8"/><circle cx="222" cy="185" r="2.3" fill="#f1f2e8"/><circle cx="158" cy="203" r="1.9" fill="#ffffff"/><circle cx="257" cy="158" r="1.8" fill="#f1f2e8"/><circle cx="211" cy="194" r="2.3" fill="#dfe5d2"/><circle cx="311" cy="137" r="1.7" fill="#f1f2e8"/><circle cx="103" cy="158" r="1.3" fill="#ffffff"/><circle cx="152" cy="130" r="2.1" fill="#dfe5d2"/><circle cx="244" cy="151" r="1.5" fill="#ffffff"/><ellipse cx="342" cy="204" rx="6.2" ry="17.9" transform="rotate(78 342 204)" fill="#7d9658"/><ellipse cx="104" cy="212" rx="6.0" ry="15.6" transform="rotate(-39 104 212)" fill="#5f7a40"/><ellipse cx="83" cy="209" rx="6.4" ry="19.6" transform="rotate(-56 83 209)" fill="#8aa066"/><ellipse cx="154" cy="218" rx="5.2" ry="21.9" transform="rotate(-19 154 218)" fill="#7d9658"/><ellipse cx="344" cy="200" rx="5.1" ry="20.2" transform="rotate(44 344 200)" fill="#5f7a40"/><ellipse cx="280" cy="226" rx="7.0" ry="21.6" transform="rotate(48 280 226)" fill="#8aa066"/><ellipse cx="100" cy="229" rx="7.1" ry="14.7" transform="rotate(-38 100 229)" fill="#6f8a4c"/><ellipse cx="293" cy="203" rx="5.8" ry="14.1" transform="rotate(55 293 203)" fill="#6f8a4c"/><ellipse cx="293" cy="199" rx="5.2" ry="20.9" transform="rotate(54 293 199)" fill="#8aa066"/><ellipse cx="59" cy="232" rx="7.7" ry="19.0" transform="rotate(-62 59 232)" fill="#6f8a4c"/><ellipse cx="212" cy="205" rx="5.5" ry="14.4" transform="rotate(-16 212 205)" fill="#7d9658"/><ellipse cx="332" cy="219" rx="5.6" ry="17.6" transform="rotate(53 332 219)" fill="#7d9658"/><ellipse cx="136" cy="225" rx="5.1" ry="14.1" transform="rotate(-2 136 225)" fill="#7d9658"/><ellipse cx="208" cy="205" rx="7.0" ry="19.2" transform="rotate(-1 208 205)" fill="#8aa066"/><ellipse cx="218" cy="228" rx="5.9" ry="15.7" transform="rotate(29 218 228)" fill="#7d9658"/><ellipse cx="157" cy="226" rx="6.9" ry="17.2" transform="rotate(-8 157 226)" fill="#5f7a40"/><ellipse cx="347" cy="226" rx="6.9" ry="21.0" transform="rotate(33 347 226)" fill="#8aa066"/><ellipse cx="104" cy="199" rx="7.6" ry="19.4" transform="rotate(-23 104 199)" fill="#5f7a40"/><ellipse cx="233" cy="221" rx="5.6" ry="16.2" transform="rotate(-11 233 221)" fill="#6f8a4c"/><ellipse cx="134" cy="231" rx="6.6" ry="16.0" transform="rotate(-4 134 231)" fill="#5f7a40"/><ellipse cx="120" cy="203" rx="5.3" ry="16.2" transform="rotate(-42 120 203)" fill="#7d9658"/><ellipse cx="129" cy="224" rx="7.5" ry="15.2" transform="rotate(-50 129 224)" fill="#6f8a4c"/><ellipse cx="173" cy="207" rx="5.3" ry="21.7" transform="rotate(-6 173 207)" fill="#7d9658"/><ellipse cx="251" cy="222" rx="6.2" ry="16.6" transform="rotate(38 251 222)" fill="#8aa066"/><ellipse cx="100" cy="222" rx="5.1" ry="20.7" transform="rotate(-34 100 222)" fill="#8aa066"/><ellipse cx="273" cy="225" rx="6.6" ry="18.0" transform="rotate(10 273 225)" fill="#6f8a4c"/><ellipse cx="301" cy="217" rx="7.0" ry="19.5" transform="rotate(58 301 217)" fill="#7d9658"/><ellipse cx="81" cy="198" rx="7.9" ry="17.0" transform="rotate(-42 81 198)" fill="#8aa066"/><ellipse cx="221" cy="219" rx="7.0" ry="17.9" transform="rotate(13 221 219)" fill="#6f8a4c"/><ellipse cx="191" cy="199" rx="7.7" ry="14.7" transform="rotate(17 191 199)" fill="#6f8a4c"/><ellipse cx="277" cy="213" rx="7.5" ry="15.9" transform="rotate(45 277 213)" fill="#7d9658"/><ellipse cx="124" cy="219" rx="7.5" ry="14.6" transform="rotate(-34 124 219)" fill="#5f7a40"/><ellipse cx="283" cy="218" rx="5.2" ry="15.2" transform="rotate(39 283 218)" fill="#5f7a40"/><ellipse cx="249" cy="221" rx="5.4" ry="17.9" transform="rotate(24 249 221)" fill="#8aa066"/>
  <path d="M166 180H242L238 192Q226 198 222 228H186Q182 198 170 192Z" fill="#dcb893"/>
  <path d="M166 180H242L240 186H168Z" fill="#ecd0ae"/>
  <ellipse cx="163.4" cy="178.8" rx="6.1" ry="4.0" transform="rotate(8 163.4 178.8)" fill="#fdfcf6" stroke="#e4e1d3" stroke-width=".6"/><ellipse cx="157.8" cy="183.5" rx="6.1" ry="4.0" transform="rotate(92 157.8 183.5)" fill="#fdfcf6" stroke="#e4e1d3" stroke-width=".6"/><ellipse cx="152.7" cy="179.4" rx="6.1" ry="4.0" transform="rotate(165 152.7 179.4)" fill="#fdfcf6" stroke="#e4e1d3" stroke-width=".6"/><ellipse cx="154.9" cy="173.4" rx="6.1" ry="4.0" transform="rotate(236 154.9 173.4)" fill="#fdfcf6" stroke="#e4e1d3" stroke-width=".6"/><ellipse cx="160.5" cy="173.1" rx="6.1" ry="4.0" transform="rotate(297 160.5 173.1)" fill="#fdfcf6" stroke="#e4e1d3" stroke-width=".6"/><circle cx="158" cy="178" r="2.2" fill="#ead78a"/><ellipse cx="142.8" cy="193.3" rx="5.5" ry="3.6" transform="rotate(15 142.8 193.3)" fill="#fdfcf6" stroke="#e4e1d3" stroke-width=".6"/><ellipse cx="138.4" cy="197.0" rx="5.5" ry="3.6" transform="rotate(86 138.4 197.0)" fill="#fdfcf6" stroke="#e4e1d3" stroke-width=".6"/><ellipse cx="133.4" cy="193.9" rx="5.5" ry="3.6" transform="rotate(158 133.4 193.9)" fill="#fdfcf6" stroke="#e4e1d3" stroke-width=".6"/><ellipse cx="134.1" cy="188.8" rx="5.5" ry="3.6" transform="rotate(220 134.1 188.8)" fill="#fdfcf6" stroke="#e4e1d3" stroke-width=".6"/><ellipse cx="141.5" cy="188.5" rx="5.5" ry="3.6" transform="rotate(315 141.5 188.5)" fill="#fdfcf6" stroke="#e4e1d3" stroke-width=".6"/><circle cx="138" cy="192" r="2.0" fill="#ead78a"/><ellipse cx="181.0" cy="196.5" rx="5.5" ry="3.6" transform="rotate(6 181.0 196.5)" fill="#fdfcf6" stroke="#e4e1d3" stroke-width=".6"/><ellipse cx="175.0" cy="200.9" rx="5.5" ry="3.6" transform="rotate(101 175.0 200.9)" fill="#fdfcf6" stroke="#e4e1d3" stroke-width=".6"/><ellipse cx="171.0" cy="196.7" rx="5.5" ry="3.6" transform="rotate(172 171.0 196.7)" fill="#fdfcf6" stroke="#e4e1d3" stroke-width=".6"/><ellipse cx="172.0" cy="193.0" rx="5.5" ry="3.6" transform="rotate(217 172.0 193.0)" fill="#fdfcf6" stroke="#e4e1d3" stroke-width=".6"/><ellipse cx="178.6" cy="191.7" rx="5.5" ry="3.6" transform="rotate(302 178.6 191.7)" fill="#fdfcf6" stroke="#e4e1d3" stroke-width=".6"/><circle cx="176" cy="196" r="2.0" fill="#ead78a"/><ellipse cx="123.6" cy="187.7" rx="4.4" ry="2.9" transform="rotate(25 123.6 187.7)" fill="#fdfcf6" stroke="#e4e1d3" stroke-width=".6"/><ellipse cx="119.2" cy="189.9" rx="4.4" ry="2.9" transform="rotate(101 119.2 189.9)" fill="#fdfcf6" stroke="#e4e1d3" stroke-width=".6"/><ellipse cx="116.3" cy="187.5" rx="4.4" ry="2.9" transform="rotate(157 116.3 187.5)" fill="#fdfcf6" stroke="#e4e1d3" stroke-width=".6"/><ellipse cx="117.1" cy="183.2" rx="4.4" ry="2.9" transform="rotate(224 117.1 183.2)" fill="#fdfcf6" stroke="#e4e1d3" stroke-width=".6"/><ellipse cx="121.6" cy="182.4" rx="4.4" ry="2.9" transform="rotate(294 121.6 182.4)" fill="#fdfcf6" stroke="#e4e1d3" stroke-width=".6"/><circle cx="120" cy="186" r="1.6" fill="#ead78a"/><ellipse cx="250.8" cy="190.6" rx="6.1" ry="4.0" transform="rotate(28 250.8 190.6)" fill="#fdfcf6" stroke="#e4e1d3" stroke-width=".6"/><ellipse cx="247.1" cy="193.4" rx="6.1" ry="4.0" transform="rotate(78 247.1 193.4)" fill="#fdfcf6" stroke="#e4e1d3" stroke-width=".6"/><ellipse cx="240.8" cy="189.8" rx="6.1" ry="4.0" transform="rotate(161 240.8 189.8)" fill="#fdfcf6" stroke="#e4e1d3" stroke-width=".6"/><ellipse cx="241.8" cy="184.4" rx="6.1" ry="4.0" transform="rotate(220 241.8 184.4)" fill="#fdfcf6" stroke="#e4e1d3" stroke-width=".6"/><ellipse cx="249.1" cy="183.4" rx="6.1" ry="4.0" transform="rotate(304 249.1 183.4)" fill="#fdfcf6" stroke="#e4e1d3" stroke-width=".6"/><circle cx="246" cy="188" r="2.2" fill="#ead78a"/><ellipse cx="268.0" cy="204.2" rx="5.0" ry="3.2" transform="rotate(29 268.0 204.2)" fill="#fdfcf6" stroke="#e4e1d3" stroke-width=".6"/><ellipse cx="265.1" cy="206.4" rx="5.0" ry="3.2" transform="rotate(76 265.1 206.4)" fill="#fdfcf6" stroke="#e4e1d3" stroke-width=".6"/><ellipse cx="259.6" cy="202.9" rx="5.0" ry="3.2" transform="rotate(169 259.6 202.9)" fill="#fdfcf6" stroke="#e4e1d3" stroke-width=".6"/><ellipse cx="261.2" cy="198.5" rx="5.0" ry="3.2" transform="rotate(231 261.2 198.5)" fill="#fdfcf6" stroke="#e4e1d3" stroke-width=".6"/><ellipse cx="267.2" cy="198.8" rx="5.0" ry="3.2" transform="rotate(315 267.2 198.8)" fill="#fdfcf6" stroke="#e4e1d3" stroke-width=".6"/><circle cx="264" cy="202" r="1.8" fill="#ead78a"/><ellipse cx="232.2" cy="205.6" rx="5.0" ry="3.2" transform="rotate(21 232.2 205.6)" fill="#fdfcf6" stroke="#e4e1d3" stroke-width=".6"/><ellipse cx="228.9" cy="208.4" rx="5.0" ry="3.2" transform="rotate(79 228.9 208.4)" fill="#fdfcf6" stroke="#e4e1d3" stroke-width=".6"/><ellipse cx="223.6" cy="204.7" rx="5.0" ry="3.2" transform="rotate(171 223.6 204.7)" fill="#fdfcf6" stroke="#e4e1d3" stroke-width=".6"/><ellipse cx="225.1" cy="200.5" rx="5.0" ry="3.2" transform="rotate(231 225.1 200.5)" fill="#fdfcf6" stroke="#e4e1d3" stroke-width=".6"/><ellipse cx="229.4" cy="199.7" rx="5.0" ry="3.2" transform="rotate(289 229.4 199.7)" fill="#fdfcf6" stroke="#e4e1d3" stroke-width=".6"/><circle cx="228" cy="204" r="1.8" fill="#ead78a"/><ellipse cx="292.0" cy="190.0" rx="4.4" ry="2.9" transform="rotate(0 292.0 190.0)" fill="#fdfcf6" stroke="#e4e1d3" stroke-width=".6"/><ellipse cx="288.2" cy="194.0" rx="4.4" ry="2.9" transform="rotate(87 288.2 194.0)" fill="#fdfcf6" stroke="#e4e1d3" stroke-width=".6"/><ellipse cx="284.3" cy="191.5" rx="4.4" ry="2.9" transform="rotate(158 284.3 191.5)" fill="#fdfcf6" stroke="#e4e1d3" stroke-width=".6"/><ellipse cx="285.2" cy="187.2" rx="4.4" ry="2.9" transform="rotate(225 285.2 187.2)" fill="#fdfcf6" stroke="#e4e1d3" stroke-width=".6"/><ellipse cx="289.5" cy="186.3" rx="4.4" ry="2.9" transform="rotate(292 289.5 186.3)" fill="#fdfcf6" stroke="#e4e1d3" stroke-width=".6"/><circle cx="288" cy="190" r="1.6" fill="#ead78a"/><ellipse cx="154.4" cy="212.8" rx="5.0" ry="3.2" transform="rotate(10 154.4 212.8)" fill="#fdfcf6" stroke="#e4e1d3" stroke-width=".6"/><ellipse cx="150.7" cy="216.5" rx="5.0" ry="3.2" transform="rotate(81 150.7 216.5)" fill="#fdfcf6" stroke="#e4e1d3" stroke-width=".6"/><ellipse cx="145.6" cy="212.8" rx="5.0" ry="3.2" transform="rotate(169 145.6 212.8)" fill="#fdfcf6" stroke="#e4e1d3" stroke-width=".6"/><ellipse cx="146.4" cy="209.4" rx="5.0" ry="3.2" transform="rotate(216 146.4 209.4)" fill="#fdfcf6" stroke="#e4e1d3" stroke-width=".6"/><ellipse cx="152.9" cy="208.6" rx="5.0" ry="3.2" transform="rotate(311 152.9 208.6)" fill="#fdfcf6" stroke="#e4e1d3" stroke-width=".6"/><circle cx="150" cy="212" r="1.8" fill="#ead78a"/><ellipse cx="103.6" cy="205.7" rx="4.4" ry="2.9" transform="rotate(25 103.6 205.7)" fill="#fdfcf6" stroke="#e4e1d3" stroke-width=".6"/><ellipse cx="101.0" cy="207.9" rx="4.4" ry="2.9" transform="rotate(76 101.0 207.9)" fill="#fdfcf6" stroke="#e4e1d3" stroke-width=".6"/><ellipse cx="96.0" cy="204.6" rx="4.4" ry="2.9" transform="rotate(172 96.0 204.6)" fill="#fdfcf6" stroke="#e4e1d3" stroke-width=".6"/><ellipse cx="97.8" cy="200.6" rx="4.4" ry="2.9" transform="rotate(237 97.8 200.6)" fill="#fdfcf6" stroke="#e4e1d3" stroke-width=".6"/><ellipse cx="102.8" cy="201.2" rx="4.4" ry="2.9" transform="rotate(315 102.8 201.2)" fill="#fdfcf6" stroke="#e4e1d3" stroke-width=".6"/><circle cx="100" cy="204" r="1.6" fill="#ead78a"/><ellipse cx="312.0" cy="206.6" rx="4.4" ry="2.9" transform="rotate(9 312.0 206.6)" fill="#fdfcf6" stroke="#e4e1d3" stroke-width=".6"/><ellipse cx="308.5" cy="210.0" rx="4.4" ry="2.9" transform="rotate(83 308.5 210.0)" fill="#fdfcf6" stroke="#e4e1d3" stroke-width=".6"/><ellipse cx="304.4" cy="207.6" rx="4.4" ry="2.9" transform="rotate(156 304.4 207.6)" fill="#fdfcf6" stroke="#e4e1d3" stroke-width=".6"/><ellipse cx="306.4" cy="202.3" rx="4.4" ry="2.9" transform="rotate(246 306.4 202.3)" fill="#fdfcf6" stroke="#e4e1d3" stroke-width=".6"/><ellipse cx="310.3" cy="202.8" rx="4.4" ry="2.9" transform="rotate(306 310.3 202.8)" fill="#fdfcf6" stroke="#e4e1d3" stroke-width=".6"/><circle cx="308" cy="206" r="1.6" fill="#ead78a"/><ellipse cx="199.9" cy="212.8" rx="4.4" ry="2.9" transform="rotate(11 199.9 212.8)" fill="#fdfcf6" stroke="#e4e1d3" stroke-width=".6"/><ellipse cx="196.4" cy="216.0" rx="4.4" ry="2.9" transform="rotate(85 196.4 216.0)" fill="#fdfcf6" stroke="#e4e1d3" stroke-width=".6"/><ellipse cx="192.5" cy="213.9" rx="4.4" ry="2.9" transform="rotate(152 192.5 213.9)" fill="#fdfcf6" stroke="#e4e1d3" stroke-width=".6"/><ellipse cx="192.8" cy="209.6" rx="4.4" ry="2.9" transform="rotate(217 192.8 209.6)" fill="#fdfcf6" stroke="#e4e1d3" stroke-width=".6"/><ellipse cx="197.4" cy="208.3" rx="4.4" ry="2.9" transform="rotate(291 197.4 208.3)" fill="#fdfcf6" stroke="#e4e1d3" stroke-width=".6"/><circle cx="196" cy="212" r="1.6" fill="#ead78a"/><ellipse cx="217.2" cy="215.5" rx="3.9" ry="2.5" transform="rotate(25 217.2 215.5)" fill="#fdfcf6" stroke="#e4e1d3" stroke-width=".6"/><ellipse cx="214.6" cy="217.5" rx="3.9" ry="2.5" transform="rotate(81 214.6 217.5)" fill="#fdfcf6" stroke="#e4e1d3" stroke-width=".6"/><ellipse cx="210.5" cy="214.5" rx="3.9" ry="2.5" transform="rotate(172 210.5 214.5)" fill="#fdfcf6" stroke="#e4e1d3" stroke-width=".6"/><ellipse cx="211.5" cy="211.6" rx="3.9" ry="2.5" transform="rotate(223 211.5 211.6)" fill="#fdfcf6" stroke="#e4e1d3" stroke-width=".6"/><ellipse cx="215.5" cy="210.9" rx="3.9" ry="2.5" transform="rotate(296 215.5 210.9)" fill="#fdfcf6" stroke="#e4e1d3" stroke-width=".6"/><circle cx="214" cy="214" r="1.4" fill="#ead78a"/><ellipse cx="79.4" cy="214.9" rx="3.9" ry="2.5" transform="rotate(15 79.4 214.9)" fill="#fdfcf6" stroke="#e4e1d3" stroke-width=".6"/><ellipse cx="76.7" cy="217.4" rx="3.9" ry="2.5" transform="rotate(78 76.7 217.4)" fill="#fdfcf6" stroke="#e4e1d3" stroke-width=".6"/><ellipse cx="72.8" cy="215.5" rx="3.9" ry="2.5" transform="rotate(155 72.8 215.5)" fill="#fdfcf6" stroke="#e4e1d3" stroke-width=".6"/><ellipse cx="74.5" cy="210.8" rx="3.9" ry="2.5" transform="rotate(245 74.5 210.8)" fill="#fdfcf6" stroke="#e4e1d3" stroke-width=".6"/><ellipse cx="78.5" cy="211.5" rx="3.9" ry="2.5" transform="rotate(315 78.5 211.5)" fill="#fdfcf6" stroke="#e4e1d3" stroke-width=".6"/><circle cx="76" cy="214" r="1.4" fill="#ead78a"/><ellipse cx="335.2" cy="215.4" rx="3.9" ry="2.5" transform="rotate(24 335.2 215.4)" fill="#fdfcf6" stroke="#e4e1d3" stroke-width=".6"/><ellipse cx="331.9" cy="217.5" rx="3.9" ry="2.5" transform="rotate(91 331.9 217.5)" fill="#fdfcf6" stroke="#e4e1d3" stroke-width=".6"/><ellipse cx="328.5" cy="214.5" rx="3.9" ry="2.5" transform="rotate(171 328.5 214.5)" fill="#fdfcf6" stroke="#e4e1d3" stroke-width=".6"/><ellipse cx="330.5" cy="210.8" rx="3.9" ry="2.5" transform="rotate(244 330.5 210.8)" fill="#fdfcf6" stroke="#e4e1d3" stroke-width=".6"/><ellipse cx="334.0" cy="211.1" rx="3.9" ry="2.5" transform="rotate(304 334.0 211.1)" fill="#fdfcf6" stroke="#e4e1d3" stroke-width=".6"/><circle cx="332" cy="214" r="1.4" fill="#ead78a"/>
  <rect x="199.500" y="31" width="9" height="22" rx="4" fill="#2a2522"/><rect x="196.500" y="50" width="15" height="17" rx="2" fill="#3a332e"/>
  <path d="M183 82Q183 68 196 67H212Q225 68 225 82V170Q225 176 220 176H188Q183 176 183 170Z" fill="#7a400f"/>
  <path d="M188 80V168" stroke="#b06a26" stroke-width="3.500" opacity=".75"/><path d="M203.500 70V150" stroke="#4a2406" stroke-width="3" opacity=".6"/>
  <path d="M176 186H232L228 196Q222 200 220 228H188Q186 200 180 196Z" fill="#dcb893"/>
</symbol>
</defs></svg>
<!-- ================= LEFT APP ================= -->
<div id="tg" class="a">
  <div id="side" class="a">
    <svg class="a" style="left:28px;top:20px" width="34" height="34" viewBox="0 0 34 34" fill="none" stroke="#3c97de" stroke-width="2.3" stroke-linecap="round" stroke-linejoin="round"><path d="M17 5.5H7.5A3.5 3.5 0 0 0 4 9v17.5A3.500 3.500 0 0 0 7.500 30H25a3.500 3.500 0 0 0 3.500-3.500V17"/><path d="M13.500 20.500L30.500 2.500"/></svg>
    <div class="a circ" style="top:87px;background:#0e8ae0"></div>
    <svg class="a" style="left:25px;top:104px" width="37" height="36" viewBox="0 0 37 36"><rect x="0" y="0" width="37" height="8.500" rx="1.500" fill="#fff"/><path d="M1.500 10H35.500V33a2 2 0 0 1-2 2H3.500a2 2 0 0 1-2-2Z" fill="#fff"/><rect x="11.500" y="14.500" width="14" height="4.200" rx="2.100" fill="#0e8ae0"/></svg>
    <div class="a" style="left:0;top:173px;width:92px;height:102px;background:#4677a8"></div>
    <div class="a circ" style="top:187px;background:#fafafa"></div>
    <svg class="a" style="left:7px;top:187px" width="73" height="73"><use href="#hand"/></svg>
    <div class="a circ" style="top:289px;background:linear-gradient(180deg,#85caf9,#6ab7f1)"></div>
    <svg class="a" style="left:29px;top:309px" width="28" height="33" viewBox="0 0 28 33" fill="none" stroke="#fff" stroke-width="3.600" stroke-linejoin="miter"><path d="M2 2H26V29.500L14 21.500L2 29.500Z"/></svg>
    <div class="a" style="left:0;top:1278px;width:93px;height:70px;background:#38adfb;overflow:hidden"><div class="a" style="left:0;top:0;width:93px;height:58px;overflow:hidden"><div class="a" style="left:-1px;top:.5px;width:91px;height:91px;border-radius:50%;background:#80c6ff"></div></div></div>
    <svg class="a" style="left:29.500px;top:1307.500px" width="29" height="29" viewBox="0 0 30 30" fill="none" stroke="#fff" stroke-width="3.600" opacity=".95" stroke-linecap="round" stroke-linejoin="round"><path d="M4 13A11 11 0 0 1 23.500 7.500"/><path d="M26 3.500V9.500H20"/><path d="M26 17A11 11 0 0 1 6.500 22.500"/><path d="M4 26.500V20.500H10"/></svg>
</div>
  <div id="hdr" class="a">
    <div class="a" style="left:32px;top:10px;width:52px;height:52px;border-radius:50%;background:#fafafa"></div>
    <svg class="a" style="left:32px;top:10px" width="52" height="52"><use href="#hand"/></svg>
    <div class="a nw nm">Manus</div>
    <div class="a nw sub">bot</div>
    <svg class="a" style="left:468px;top:21px" width="32" height="32" viewBox="0 0 32 32" fill="none" stroke="#3c97de" stroke-width="2.600" stroke-linecap="round"><circle cx="13" cy="13" r="10.500"/><path d="M21 21L29.500 29.500"/></svg>
    <svg class="a" style="left:545px;top:32px" width="30" height="8" viewBox="0 0 30 8" fill="#3c97de"><circle cx="4" cy="4" r="3.200"/><circle cx="14.500" cy="4" r="3.200"/><circle cx="25" cy="4" r="3.200"/></svg>
</div>
  <div id="chat" class="a">
    <div class="a" style="left:587px;top:0;width:23px;height:1222px;background:#38434d"></div>
    <div class="a" style="left:591px;top:832px;width:16px;height:156px;border-radius:8px;background:#a2a7ab"></div>
    <div id="bub" class="a"></div>
    <div id="msg" class="a">Your anti-ageing serum launch video is ready!<br>Here's what you've got:<br><br>Full launch video (~23 seconds) — four cinematic<br>shots stitched together with smooth crossfade<br>transitions:<br><br>1. Opening Reveal (~6s) — dramatic spotlight on the<br>serum bottle with golden particles<br>2. Close-Up (~6s) — macro shot of a golden serum<br>droplet falling from the dropper<br>3. Lifestyle (~6s) — woman with radiant, glowing<br>skin alongside the product<br>4. Final Reveal (~8s) — botanical product shot with<br>white flowers and greenery for a serene close<br><br>I'm attaching the full stitched video plus all four<br>individual shots in case you want to use any of them<br>separately. Not bad for a mockup, right?</div>
    <div id="msgt" class="a nw">11:39 AM</div>
    <div id="pill" class="a nw">14 February</div>
    <div class="a vid" style="top:441px"><svg class="a" style="left:0;top:0;overflow:hidden" width="408" height="228"><use href="#sc1"/></svg><div class="a dur nw" style="background:none">00:23</div><div class="a tm nw">11:39 AM</div></div>
    <div class="a vid" style="top:679px"><svg class="a" style="left:0;top:0;overflow:hidden" width="408" height="228"><use href="#sc1"/></svg><div class="a dur nw" style="background:none">00:06</div><div class="a tm nw">11:39 AM</div></div>
    <div class="a vid" style="top:918px"><svg class="a" style="left:0;top:0;overflow:hidden" width="408" height="228"><use href="#sc2"/></svg><div class="a dur nw">00:06</div><div class="a tm nw">11:39 AM</div></div>
    <div class="a vid" style="top:1156px"><svg class="a" style="left:0;top:0;overflow:hidden" width="408" height="228"><use href="#sc3"/></svg><div class="a dur nw">00:06</div></div>
    <svg class="a" style="left:476px;top:639.500px;filter:blur(.7px)" width="26" height="21" viewBox="0 0 26 22" fill="#25486b"><path d="M15 0L26 9.500L15 19V13.500C8 13.500 3.500 16 0 21.500C1 13 5.500 6.500 15 5.500Z"/></svg>
    <svg class="a" style="left:531px;top:1142px" width="54" height="54" viewBox="0 0 54 54" fill="none" stroke="#b9c4ce" stroke-width="1.600" stroke-linecap="round" stroke-linejoin="round"><circle cx="27" cy="27" r="25.500"/><path d="M18 23L27 31.500L36 23" stroke-width="2"/></svg>
</div>
  <div id="hline" class="a"></div>
  <div id="inbar" class="a">
    <svg class="a" style="left:26.400px;top:15.200px" width="37" height="39" viewBox="0 0 24 24" preserveAspectRatio="none" fill="none" stroke="#b4c0cc" stroke-width="1.350" stroke-linecap="round" stroke-linejoin="round"><path d="M21.440 11.050l-9.190 9.190a6 6 0 0 1-8.490-8.490l9.190-9.190a4 4 0 0 1 5.660 5.660l-9.200 9.190a2 2 0 0 1-2.830-2.830l8.490-8.480"/></svg>
    <div class="a" style="left:86px;top:24px;width:1.500px;height:24px;background:#4b90d9"></div>
    <div id="ph" class="a nw">Write a message...</div>
    <svg class="a" style="left:484px;top:16px" width="36" height="36" viewBox="0 0 36 36" fill="none" stroke="#aeb9c4" stroke-width="2"><circle cx="18" cy="18" r="16"/><circle cx="12.500" cy="14" r="1.800" fill="#aeb9c4" stroke="none"/><circle cx="23.500" cy="14" r="1.800" fill="#aeb9c4" stroke="none"/><path d="M9.500 20.500H26.500A8.500 8.500 0 0 1 9.500 20.500Z" stroke-linejoin="round"/></svg>
    <svg class="a" style="left:542px;top:17px" width="34" height="34" viewBox="0 0 34 34" fill="none" stroke="#aeb9c4" stroke-width="2.200"><rect x="1.500" y="1.500" width="31" height="31" rx="6"/><circle cx="17" cy="17" r="7.500"/></svg>
</div>
</div>
<!-- ================= BROWSER ================= -->
<div id="br" class="a">
  <div id="tabs" class="a">
    <div class="a tl" style="left:19px;background:#fe5f57"></div>
    <div class="a tl" style="left:48px;background:#dcd6e4"></div>
    <div class="a tl" style="left:77px;background:#2bc840"></div>
    <div class="a fav" style="left:125px"></div><svg class="a" style="left:126px;top:20px" width="21" height="21"><use href="#hand"/></svg>
    <div class="a nw tt" style="left:160px;width:200px;-webkit-mask-image:none;mask-image:none">Agents - Manus</div><svg class="a tx" style="left:370px" width="12" height="12" viewBox="0 0 12 12" fill="none" stroke="#3e3944" stroke-width="2" stroke-linecap="round"><path d="M1 1L11 11M11 1L1 11"/></svg>
    <div id="atab" class="a"></div><svg class="a" style="left:421px;top:20px" width="21" height="21"><use href="#hand"/></svg>
    <div class="a nw tt" style="left:455px;width:188px;color:#1f1c22">Mock Up Video for Anti-Ageing</div><svg class="a tx" style="left:665px" width="12" height="12" viewBox="0 0 12 12" fill="none" stroke="#1f1c22" stroke-width="2" stroke-linecap="round"><path d="M1 1L11 11M11 1L1 11"/></svg>
    <div class="a fav" style="left:714px"></div><svg class="a" style="left:715px;top:20px" width="21" height="21"><use href="#hand"/></svg>
    <div class="a nw tt" style="left:749px;width:186px">Create Profile Pictures for</div><svg class="a tx" style="left:958px" width="12" height="12" viewBox="0 0 12 12" fill="none" stroke="#3e3944" stroke-width="2" stroke-linecap="round"><path d="M1 1L11 11M11 1L1 11"/></svg>
    <div class="a tsep" style="left:990px"></div>
    <div class="a fav" style="left:1007px"></div><svg class="a" style="left:1008px;top:20px" width="21" height="21"><use href="#hand"/></svg>
    <div class="a nw tt" style="left:1042px;width:190px">Summarize This Week's News</div><svg class="a tx" style="left:1251px" width="12" height="12" viewBox="0 0 12 12" fill="none" stroke="#3e3944" stroke-width="2" stroke-linecap="round"><path d="M1 1L11 11M11 1L1 11"/></svg>
    <div class="a tsep" style="left:1283px"></div>
    <svg class="a" style="left:1302px;top:22px" width="15" height="15" viewBox="0 0 15 15" fill="none" stroke="#3e3944" stroke-width="2" stroke-linecap="round"><path d="M7.500 1V14M1 7.500H14"/></svg>
    <div class="a" style="left:1408px;top:10px;width:39px;height:39px;border-radius:12px;background:#f4eefb"></div>
    <svg class="a" style="left:1421px;top:26px" width="13" height="8" viewBox="0 0 13 8" fill="none" stroke="#2c2832" stroke-width="2.200" stroke-linecap="round" stroke-linejoin="round"><path d="M1.500 1.500L6.500 6.500L11.500 1.500"/></svg>
</div>
  <div id="tool" class="a">
    <svg class="a" style="left:23px;top:24px" width="20" height="18" viewBox="0 0 20 18" fill="none" stroke="#b3adb9" stroke-width="2" stroke-linecap="round" stroke-linejoin="round"><path d="M18 9H2M9 2L2 9L9 16"/></svg>
    <svg class="a" style="left:74px;top:24px" width="20" height="18" viewBox="0 0 20 18" fill="none" stroke="#b3adb9" stroke-width="2" stroke-linecap="round" stroke-linejoin="round"><path d="M2 9H18M11 2L18 9L11 16"/></svg>
    <svg class="a" style="left:127px;top:23px" width="20" height="20" viewBox="0 0 20 20" fill="none" stroke="#48444d" stroke-width="2.200" stroke-linecap="round" stroke-linejoin="round"><path d="M17.500 10A7.500 7.500 0 1 1 14.800 4.200"/><path d="M17.500 2V7.500H12" /></svg>
    <div id="omni" class="a"></div>
    <div class="a" style="left:181px;top:16px;width:34px;height:34px;border-radius:50%;background:#fdfbfe"></div>
    <svg class="a" style="left:188px;top:24px" width="20" height="18" viewBox="0 0 20 18" fill="none" stroke="#2f2b33" stroke-width="2" stroke-linecap="round"><circle cx="4.500" cy="4" r="2.600"/><path d="M11 4H18.500"/><circle cx="15.500" cy="14" r="2.600"/><path d="M1.500 14H9"/></svg>
    <div id="url" class="a nw">manus.im/app/02uz1tz8CYxZUC9g6yo0a6?isSubTask=1</div>
    <svg class="a" style="left:1089px;top:22px" width="22" height="21" viewBox="0 0 22 21" fill="none" stroke="#3e3944" stroke-width="2" stroke-linejoin="round"><path d="M11 1.500L13.900 7.600L20.500 8.400L15.600 13L16.900 19.500L11 16.300L5.100 19.500L6.400 13L1.500 8.400L8.100 7.600Z"/></svg>
    <svg class="a" style="left:1161px;top:24px" width="22" height="18" viewBox="0 0 22 18"><rect x="1" y="1" width="20" height="16" rx="2.500" fill="#cfe3fb" stroke="#1b6fe0" stroke-width="2"/><rect x="1" y="1" width="20" height="3.500" fill="#1b6fe0"/><path d="M8 13L13.500 7.500M10 7.500H13.500V11" stroke="#1b6fe0" stroke-width="1.600" fill="none"/></svg>
    <svg class="a" style="left:1212px;top:20px" width="26" height="26" viewBox="0 0 26 26" fill="none" stroke="#2f2b33" stroke-width="2.200" stroke-linejoin="round"><path d="M3 8.500H8.500V6.500a3 3 0 0 1 6 0V8.500H20V14h1.500a3 3 0 0 1 0 6H20v3.500H3Z"/></svg>
    <div class="a" style="left:1262px;top:22px;width:2px;height:22px;background:#e5daf5;border-radius:1px"></div>
    <div id="chip" class="a"></div>
    <div class="a" style="left:1292px;top:19px;width:28px;height:28px;border-radius:50%;background:#8c8a90;overflow:hidden"><div class="a" style="left:9px;top:5px;width:11px;height:12px;border-radius:50%;background:#e7c3ad"></div><div class="a" style="left:5px;top:2px;width:14px;height:24px;border-radius:8px 8px 3px 3px;background:#2a2024;z-index:-0"></div><div class="a" style="left:10px;top:6px;width:9px;height:11px;border-radius:50%;background:#e7c3ad"></div><div class="a" style="left:7px;top:17px;width:16px;height:12px;border-radius:6px 6px 0 0;background:#f0eef0"></div></div>
    <div class="a nw" style="left:1330px;top:22px;font-size:19.500px;line-height:23px;color:#2a1d4e;-webkit-text-stroke:.3px #2a1d4e">Work</div>
    <svg class="a" style="left:1422px;top:22px" width="6" height="24" viewBox="0 0 6 24" fill="#2f2b33"><circle cx="3" cy="3" r="2.200"/><circle cx="3" cy="12" r="2.200"/><circle cx="3" cy="21" r="2.200"/></svg>
</div>
  <div id="page" class="a">
    
    <div id="ttl" class="a nw">Manus 1.6 Max</div>
    <svg class="a" style="left:222px;top:39px" width="13" height="8" viewBox="0 0 13 8" fill="none" stroke="#858481" stroke-width="1.800" stroke-linecap="round" stroke-linejoin="round"><path d="M1 1L6.500 6.500L12 1"/></svg>
    <svg class="a" style="left:377px;top:31px" width="24" height="22" viewBox="0 0 24 22" fill="none" stroke="#5f5f5c" stroke-width="1.900" stroke-linecap="round" stroke-linejoin="round"><circle cx="10" cy="6.500" r="4.500"/><path d="M1.500 20.500C2 15 5.500 12.500 10 12.500c2 0 3.600.5 5 1.400"/><path d="M19 14.500V21M15.800 17.800H22.200"/></svg>
    <svg class="a" style="left:424px;top:32px" width="24" height="20" viewBox="0 0 24 20" fill="none" stroke="#5f5f5c" stroke-width="1.900" stroke-linecap="round" stroke-linejoin="round"><path d="M14 1.500L22.500 9L14 16.500V12C8 12 4 14 1.500 18.500C2 11.500 6 6.500 14 6Z"/></svg>
    <svg class="a" style="left:470px;top:30px" width="21" height="23" viewBox="0 0 21 23" fill="none" stroke="#5f5f5c" stroke-width="1.800" stroke-linecap="round" stroke-linejoin="round"><path d="M4.500 6.500V4a2.300 2.300 0 0 1 2.300-2.300H13L19.300 8V19a2.300 2.300 0 0 1-2.300 2.300H5"/><path d="M13 2V8H19" stroke-width="1.300" opacity=".7"/><circle cx="5" cy="13" r="3.100"/><path d="M7.400 15.400L9.300 17.300"/></svg>
    <svg class="a" style="left:518px;top:39px" width="20" height="6" viewBox="0 0 20 6" fill="#5f5f5c"><circle cx="2.500" cy="3" r="2"/><circle cx="10" cy="3" r="2"/><circle cx="17.500" cy="3" r="2"/></svg>
    <div id="tbl" class="a">
      <div class="a h"></div><div class="a c"></div>
      <div class="a r" style="top:17px"></div><div class="a r" style="top:69px"></div><div class="a r" style="top:123px"></div><div class="a r" style="top:177px"></div><div class="a r" style="top:231px"></div>
      <div class="a t" style="left:21px;top:29px;font-weight:700;font-size:19.800px;letter-spacing:.55px">anti_ageing_serum_launch.mp4</div><div class="a t" style="left:379px;top:29px;">Full stitched launch video</div><div class="a t" style="left:21px;top:83px;">shot1.mp4</div><div class="a t" style="left:379px;top:83px;">Opening reveal —</div><div class="a t" style="left:21px;top:136px;">shot2.mp4</div><div class="a t" style="left:379px;top:136px;">Close-up — macro</div><div class="a t" style="left:21px;top:190px;">shot3.mp4</div><div class="a t" style="left:379px;top:190px;">Lifestyle — woman</div><div class="a t" style="left:21px;top:258px;">shot4.mp4</div><div class="a t" style="left:379px;top:243px;">Final reveal — botanical</div><div class="a t" style="left:379px;top:272px;">greenery</div>
    </div>
    <div class="a tile" style="left:31px;top:429px"><svg class="a" style="left:0;top:0;overflow:hidden" width="164" height="164"><use href="#sc1"/></svg><div class="a play"></div></div><div class="a tile" style="left:209px;top:429px"><svg class="a" style="left:0;top:0;overflow:hidden" width="164" height="164"><use href="#sc1"/></svg><div class="a play"></div></div><div class="a tile" style="left:389px;top:429px"><svg class="a" style="left:0;top:0;overflow:hidden" width="164" height="164"><use href="#sc2"/></svg><div class="a play"></div></div><div class="a tile" style="left:31px;top:607px"><div class="a play"></div></div><div class="a tile" style="left:209px;top:607px"><svg class="a" style="left:0;top:0;overflow:hidden" width="164" height="164"><use href="#sc5"/></svg><div class="a play"></div></div>
    <svg class="a" style="left:32px;top:803px" width="20" height="16" viewBox="0 0 20 16" fill="none" stroke="#30bb54" stroke-width="2" stroke-linecap="round" stroke-linejoin="round"><path d="M1.500 8.500L6.500 14L18.500 1.500"/></svg>
    <div class="a nw" style="left:65px;top:799px;font-size:20.800px;line-height:25px;color:#25b94a">Task completed</div>
    <div class="a" style="left:30px;top:838px;width:388px;height:46px;border-radius:11px;background:#f0f0f0"></div>
    <div class="a nw" style="left:53px;top:848px;font-size:20.700px;line-height:25px;color:#5a5a57">How was this result?</div>
    <svg class="a" style="left:260px;top:850px" width="20" height="19" viewBox="0 0 20 19" fill="#d9d9d9"><path d="M10 .5L12.900 6.600L19.500 7.400L14.600 12L15.900 18.500L10 15.300L4.100 18.500L5.400 12L.5 7.400L7.100 6.600Z"/></svg><svg class="a" style="left:288px;top:850px" width="20" height="19" viewBox="0 0 20 19" fill="#d9d9d9"><path d="M10 .5L12.900 6.600L19.500 7.400L14.600 12L15.900 18.500L10 15.300L4.100 18.500L5.400 12L.5 7.400L7.100 6.600Z"/></svg><svg class="a" style="left:317px;top:850px" width="20" height="19" viewBox="0 0 20 19" fill="#d9d9d9"><path d="M10 .5L12.900 6.600L19.500 7.400L14.600 12L15.900 18.500L10 15.300L4.100 18.500L5.400 12L.5 7.400L7.100 6.600Z"/></svg><svg class="a" style="left:346px;top:850px" width="20" height="19" viewBox="0 0 20 19" fill="#d9d9d9"><path d="M10 .5L12.900 6.600L19.500 7.400L14.600 12L15.900 18.500L10 15.300L4.100 18.500L5.400 12L.5 7.400L7.100 6.600Z"/></svg><svg class="a" style="left:375px;top:850px" width="20" height="19" viewBox="0 0 20 19" fill="#d9d9d9"><path d="M10 .5L12.900 6.600L19.500 7.400L14.600 12L15.900 18.500L10 15.300L4.100 18.500L5.400 12L.5 7.400L7.100 6.600Z"/></svg>
    <div class="a" style="left:30px;top:999px;width:523px;height:54px;border-radius:17px;background:#fff;border:1px solid #ececec;box-shadow:0 2px 8px rgba(0,0,0,.04)"></div>
    <div class="a" style="left:50px;top:945px;width:142px;height:97px;border-radius:8px;background:#fff;box-shadow:0 4px 14px rgba(0,0,0,.12),0 0 1px rgba(0,0,0,.15);overflow:hidden"><div class="a nw" style="left:0;top:3.500px;width:142px;text-align:center;font-size:4.500px;line-height:8px;color:#9a9a9a">ffmpeg</div><div class="a nw" style="left:6px;top:14.8px;font-family:'Liberation Mono',monospace;font-size:5.650px;line-height:8px;color:#62c078;transform-origin:0 0">ubuntu@sandbox:~/video_project $ ls -lh</div><div class="a nw" style="left:6px;top:22.9px;font-family:'Liberation Mono',monospace;font-size:5.650px;line-height:8px;color:#777;transform-origin:0 0">/home/ubuntu/video_project/anti_ageing_</div><div class="a nw" style="left:6px;top:30.9px;font-family:'Liberation Mono',monospace;font-size:5.650px;line-height:8px;color:#777;transform-origin:0 0">serum_launch.mp4 && ffprobe -v error -s</div><div class="a nw" style="left:6px;top:39.0px;font-family:'Liberation Mono',monospace;font-size:5.650px;line-height:8px;color:#777;transform-origin:0 0">how_entries format=duration,size -of de</div><div class="a nw" style="left:6px;top:47.0px;font-family:'Liberation Mono',monospace;font-size:5.650px;line-height:8px;color:#777;transform-origin:0 0">fault=noprint_wrappers=1 /home/ubuntu/v</div><div class="a nw" style="left:6px;top:55.0px;font-family:'Liberation Mono',monospace;font-size:5.650px;line-height:8px;color:#777;transform-origin:0 0">ideo_project/anti_ageing_serum_launch.m</div><div class="a nw" style="left:6px;top:63.1px;font-family:'Liberation Mono',monospace;font-size:5.650px;line-height:8px;color:#777;transform-origin:0 0">p4</div><div class="a nw" style="left:6px;top:71.2px;font-family:'Liberation Mono',monospace;font-size:5.650px;line-height:8px;color:#777;transform-origin:0 0">-rw-rw-r-- 1 ubuntu ubuntu 9.7M Feb 13</div><div class="a nw" style="left:6px;top:79.2px;font-family:'Liberation Mono',monospace;font-size:5.650px;line-height:8px;color:#777;transform-origin:0 0">22:38 /home/ubuntu/video_project/anti_a</div><div class="a nw" style="left:6px;top:87.3px;font-family:'Liberation Mono',monospace;font-size:5.650px;line-height:8px;color:#777;transform-origin:0 0">geing_serum_launch.mp4</div><div class="a nw" style="left:6px;top:95.3px;font-family:'Liberation Mono',monospace;font-size:5.650px;line-height:8px;color:#777;transform-origin:0 0">duration=23.433333</div></div>
    <svg class="a" style="left:209px;top:1019px" width="20" height="16" viewBox="0 0 20 16" fill="none" stroke="#30bb54" stroke-width="2" stroke-linecap="round" stroke-linejoin="round"><path d="M1.500 8.500L6.500 14L18.500 1.500"/></svg>
    <div class="a nw" style="left:245px;top:1014px;font-size:20.700px;line-height:26px;color:#34322d">Deliver the final vid...</div>
    <div class="a nw" style="left:464px;top:1015px;font-size:19.500px;line-height:25px;color:#858481">3 / 3</div>
    <svg class="a" style="left:517px;top:1022px" width="14" height="9" viewBox="0 0 14 9" fill="none" stroke="#858481" stroke-width="2" stroke-linecap="round" stroke-linejoin="round"><path d="M1.500 7.500L7 2L12.500 7.500"/></svg>
    <div class="a" style="left:30px;top:1066px;width:524px;height:154px;border-radius:28px;background:#fff;border:1.500px solid #dedede"></div>
    <div class="a" style="left:54px;top:1091px;width:1.500px;height:25px;background:#34322d"></div>
    <div class="a nw" style="left:55px;top:1090px;font-size:21.700px;line-height:27px;color:#b6b6b3">Send message to Manus</div>
    <div class="a" style="left:510px;top:1100px;width:12px;height:12px;border-radius:50%;background:#5a3fd6"></div>
    <div class="a" style="left:33px;top:1121px;width:43px;height:33px;border-radius:16.500px;background:#0a7cff;box-shadow:0 2px 6px rgba(0,0,0,.15);color:#fff;font-weight:700;font-size:17px;line-height:33px;text-align:center">A</div>
    <div class="a ib" style="left:49px;top:1156px;width:44px;height:44px"></div>
    <svg class="a" style="left:63px;top:1170px" width="16" height="16" viewBox="0 0 16 16" fill="none" stroke="#34322d" stroke-width="2" stroke-linecap="round"><path d="M8 1V15M1 8H15"/></svg>
    <div class="a ib" style="left:107px;top:1156px;width:132px;height:45px;border-radius:22.500px"></div>
    <div class="a" style="left:120px;top:1167px;width:22px;height:22px;border-radius:50%;background:conic-gradient(from 200deg,#7b2ff7,#22c1dc,#18c7c0,#7b2ff7)"></div>
    <div class="a nw" style="left:126px;top:1167px;font-family:'Liberation Serif',serif;font-style:italic;font-weight:700;font-size:17px;line-height:22px;color:#fff">C</div>
    <svg class="a" style="left:148px;top:1167px" width="23" height="23" viewBox="0 0 16 16" fill="#111"><path d="M8 0C3.580 0 0 3.580 0 8c0 3.540 2.290 6.530 5.470 7.590.4.070.55-.17.55-.38 0-.19-.01-.82-.01-1.490-2.010.37-2.530-.49-2.690-.94-.09-.23-.48-.94-.82-1.130-.28-.15-.68-.52-.01-.53.630-.01 1.080.58 1.230.82.720 1.210 1.870.87 2.330.66.070-.52.280-.87.510-1.070-1.780-.2-3.640-.89-3.640-3.950 0-.87.310-1.590.82-2.150-.08-.2-.36-1.020.08-2.120 0 0 .67-.21 2.200.82.640-.18 1.320-.27 2-.27s1.360.09 2 .27c1.530-1.040 2.200-.82 2.200-.82.440 1.100.16 1.920.08 2.120.51.560.82 1.270.82 2.150 0 3.070-1.870 3.750-3.650 3.950.29.250.54.730.54 1.480 0 1.070-.01 1.930-.01 2.200 0 .21.150.46.550.38A8.010 8.010 0 0 0 16 8c0-4.420-3.580-8-8-8Z"/></svg>
    <svg class="a" style="left:178px;top:1171px" width="21" height="16" viewBox="0 0 21.500 16"><path d="M2.200 3L10.750 9.600L19.300 3" fill="none" stroke="#ea4335" stroke-width="4.200" stroke-linejoin="miter"/><rect x="0" y="3.500" width="4.400" height="12.500" fill="#4285f4"/><rect x="17.100" y="3.500" width="4.400" height="12.500" fill="#34a853"/><path d="M0 3.500V2.600Q.3 .2 2.800 .7L4.400 2V6.800Z" fill="#c5221f"/><path d="M21.500 3.500V2.600Q21.200 .2 18.700 .7L17.100 2V6.800Z" fill="#fbbc04"/></svg>
    <div class="a nw" style="left:206px;top:1167px;font-size:18px;line-height:22px;color:#858481">+3</div>
    <div class="a ib" style="left:255px;top:1156px;width:44px;height:44px"></div>
    <svg class="a" style="left:265px;top:1166px" width="24" height="24" viewBox="0 0 24 24" fill="none" stroke="#34322d" stroke-width="1.900" stroke-linejoin="round" stroke-linecap="round"><path d="M9 5.200a2.300 2.300 0 1 1 4.600 0c0 .7-.3 1-.3 1.500 0 .4.300.7.700.7H17c1 0 1.800.8 1.800 1.800v2.500c0 .4.300.7.700.7.500 0 .8-.3 1.500-.3a2.300 2.300 0 1 1 0 4.600c-.7 0-1-.3-1.500-.3-.4 0-.7.300-.7.700V19.500c0 1-.8 1.800-1.800 1.800h-2.600c-.4 0-.7-.3-.7-.7 0-.5.300-.8.300-1.500a2.300 2.300 0 1 0-4.600 0c0 .7.300 1 .3 1.500 0 .4-.3.700-.7.700H5.500c-1 0-1.800-.8-1.800-1.800v-2.700c0-.4-.3-.7-.7-.7-.5 0-.8.300-1.500.3a2.300 2.300 0 1 1 0-4.600c.7 0 1 .3 1.500.3.400 0 .7-.3.700-.7V9.200c0-1 .8-1.800 1.800-1.800h2.800c.4 0 .7-.3.700-.7 0-.5-.3-.8-.3-1.500Z" transform="translate(.8 .3) scale(.95)"/></svg>
    <svg class="a" style="left:446.500px;top:1167px" width="16.500" height="22.300" viewBox="0 0 20 27" fill="none" stroke="#34322d" stroke-width="2.400" stroke-linecap="round"><rect x="6" y="1.500" width="8" height="14.500" rx="4"/><path d="M2 12.500a8 8 0 0 0 16 0M10 20.500V25.500"/></svg>
    <div class="a" style="left:490px;top:1156px;width:44px;height:44px;border-radius:50%;background:#eeeeee"></div>
    <svg class="a" style="left:503px;top:1168px" width="18" height="20" viewBox="0 0 18 20" fill="none" stroke="#b9b9b7" stroke-width="2.200" stroke-linecap="round" stroke-linejoin="round"><path d="M9 18.500V2M2 9L9 2L16 9"/></svg>

    <div id="panel" class="a">
    <div class="a" style="left:24.500px;top:18px;width:44px;height:44px;border-radius:50%;background:#fff"></div>
    <svg class="a" style="left:35.500px;top:29px" width="22" height="22" viewBox="0 0 22 22" fill="none" stroke="#4d4d4a" stroke-width="1.800" stroke-linejoin="round"><path d="M9.800 1.600Q11 .9 12.200 1.600L18.800 5.400Q20 6.100 20 7.500V14.500Q20 15.900 18.800 16.600L12.200 20.400Q11 21.100 9.800 20.400L3.200 16.600Q2 15.900 2 14.500V7.500Q2 6.100 3.200 5.400Z"/><circle cx="11" cy="11" r="3.800"/></svg>
    <div class="a" style="left:82px;top:18px;width:154px;height:45px;border-radius:22.500px;background:#fff"></div>
    <svg class="a" style="left:105.500px;top:39px" width="16" height="3" viewBox="0 0 16 3"><rect width="16" height="2" y=".5" rx="1" fill="#45443f"/></svg>
    <div class="a nw" style="left:142.500px;top:29px;width:34px;text-align:center;font-size:19.200px;line-height:24px;color:#6f6f6c">3%</div>
    <svg class="a" style="left:196px;top:32px" width="16" height="16" viewBox="0 0 16 16" fill="none" stroke="#45443f" stroke-width="2" stroke-linecap="round"><path d="M8 1V15M1 8H15"/></svg>
    <svg class="a" style="left:729px;top:29px" width="17" height="17" viewBox="0 0 17 17" fill="none" stroke="#34322d" stroke-width="1.900" stroke-linecap="round" stroke-linejoin="round"><path d="M10 1.500H15.500V7M15.500 1.500L1.500 15.500M1.500 10V15.500H7"/></svg>
    <div class="a" style="left:772px;top:26px;width:1px;height:23px;background:#e2e2e2"></div>
    <svg class="a" style="left:800px;top:30px" width="15" height="15" viewBox="0 0 15 15" fill="none" stroke="#34322d" stroke-width="1.900" stroke-linecap="round"><path d="M1 1L14 14M14 1L1 14"/></svg>
    <svg class="a" style="left:96.7px;top:563.7px;overflow:hidden" width="130.500" height="72" preserveAspectRatio="none"><use href="#sc1" width="130.500" height="72"/></svg><svg class="a" style="left:229.0px;top:563.7px;overflow:hidden" width="130.500" height="72" preserveAspectRatio="none"><use href="#sc2" width="130.500" height="72"/></svg><svg class="a" style="left:360.9px;top:563.7px;overflow:hidden" width="130.500" height="72" preserveAspectRatio="none"><use href="#sc3" width="130.500" height="72"/></svg><div class="a" style="left:492.7px;top:563.7px;width:130.500px;height:72px;background:#000"></div><svg class="a" style="left:624.2px;top:563.7px;overflow:hidden" width="130.500" height="72" preserveAspectRatio="none"><use href="#sc5" width="130.500" height="72"/></svg>
    <div class="a" style="left:298px;top:1103px;width:256px;height:73px;border-radius:18px;background:#fff;box-shadow:0 4px 18px rgba(0,0,0,.05)"></div>
    <div class="a" style="left:309px;top:1114px;width:51px;height:51px;border-radius:11px;background:#f5f5f5"></div>
    <svg class="a" style="left:323px;top:1128px" width="24" height="24" viewBox="0 0 24 24" fill="none" stroke="#34322d" stroke-width="2.200" stroke-linejoin="round" stroke-linecap="round"><path d="M2 2.500L21.500 9.500L13 13L10 21.500Z"/></svg>
    <svg class="a" style="left:367px;top:1136px" width="12" height="7" viewBox="0 0 12 7" fill="none" stroke="#535350" stroke-width="1.700" stroke-linecap="round" stroke-linejoin="round"><path d="M1 1L6 6L11 1"/></svg>
    <svg class="a" style="left:413px;top:1127px" width="26" height="26" viewBox="0 0 26 26" fill="none" stroke="#34322d" stroke-width="2.200" stroke-linecap="round" stroke-linejoin="round"><path d="M12 23.500H5a3 3 0 0 1-3-3V5a3 3 0 0 1 3-3H20a3 3 0 0 1 3 3V13"/><circle cx="9" cy="9" r="2.300"/><path d="M2.500 22L13 11.500L17 15.500"/><path d="M19.500 24.500V17M16 20L19.500 16.500L23 20"/></svg>
    <svg class="a" style="left:481px;top:1127px" width="27" height="26" viewBox="0 0 27 26" fill="none" stroke="#34322d" stroke-width="2.200" stroke-linecap="round" stroke-linejoin="round"><path d="M2 24V13A11.500 11.500 0 1 1 13.500 24.500Z"/><path d="M9 11.500H15M9 16H18"/></svg>
    <svg class="a" style="left:527px;top:1136px" width="12" height="7" viewBox="0 0 12 7" fill="none" stroke="#535350" stroke-width="1.700" stroke-linecap="round" stroke-linejoin="round"><path d="M1 1L6 6L11 1"/></svg>
</div>
  </div>
</div>

<div class="a" style="left:709px;top:615.500px;width:6px;height:93px;border-radius:3px;background:#999"></div>
<svg class="a" style="left:0;top:0;filter:drop-shadow(1px 3px 3px rgba(0,0,0,.45))" width="2174" height="1354" viewBox="0 0 2174 1354"><polygon points="697.700,426.400 754.600,482.700 732.900,484.300 742.700,507.500 726.200,515.300 714.800,490 697.700,505" fill="#fff"/><polygon points="702.900,438.800 742.700,477.600 725.100,478.600 736,504.400 727.700,508.600 716.400,481.700 702.900,492.500" fill="#000"/></svg>

</body>
</html>
